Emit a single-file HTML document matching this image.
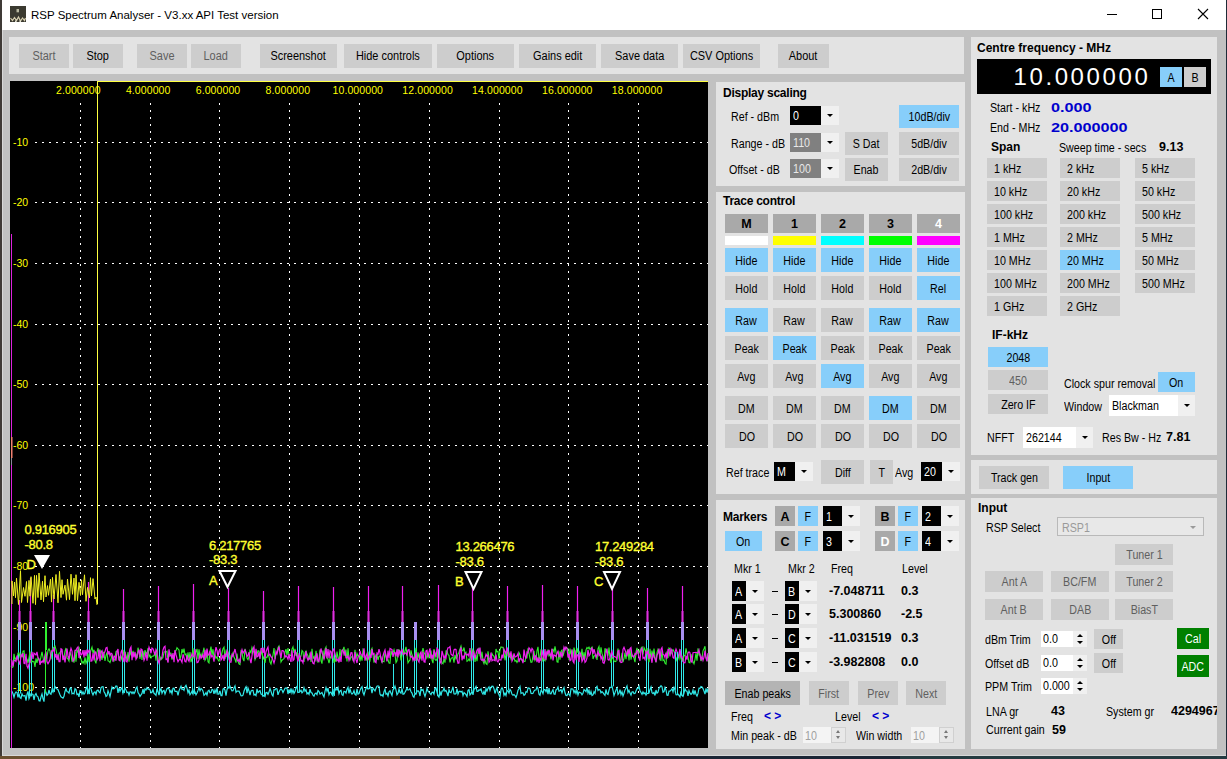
<!DOCTYPE html><html><head><meta charset="utf-8"><style>
html,body{margin:0;padding:0;width:1227px;height:759px;overflow:hidden;background:#1b2633;}
body{position:relative;font-family:"Liberation Sans",sans-serif;}
div{position:absolute;box-sizing:border-box;}
.b{display:flex;align-items:center;justify-content:center;white-space:nowrap;letter-spacing:0;padding-top:1.5px;}
.t{white-space:nowrap;letter-spacing:0;}
</style></head><body>

<div style="left:0px;top:0px;width:1227px;height:759px;background:#1e2b38;"></div>
<div style="left:0px;top:0px;width:2px;height:759px;background:#3f3a36;"></div>
<div style="left:0px;top:756px;width:400px;height:3px;background:#6b5030;"></div>
<div style="left:400px;top:756px;width:500px;height:3px;background:#1a2535;"></div>
<div style="left:900px;top:756px;width:327px;height:3px;background:#243a40;"></div>
<div style="left:2px;top:0px;width:1224px;height:756px;background:#c1c1c1;"></div>
<div style="left:2px;top:30px;width:1px;height:726px;background:#d8d8d8;"></div>
<div style="left:2px;top:755px;width:1224px;height:1px;background:#d8d8d8;"></div>
<div style="left:2px;top:0px;width:1224px;height:30px;background:#ffffff;"></div>
<div style="left:10px;top:6px;width:16px;height:16px;background:#3b3a30;"></div>
<svg style="position:absolute;left:10px;top:6px" width="16" height="16"><rect x="6.5" y="3" width="2.5" height="3.3" fill="#b8b8a0"/><polyline points="0.5,12 2.5,14.5 4.5,11.5 6.5,14.5 8.5,11 10.5,15 12.5,12 14.5,14.5 15.5,12" fill="none" stroke="#d8d0b0" stroke-width="1.2"/><rect x="5" y="14.5" width="1.5" height="1.5" fill="#e0e0d0"/><rect x="9.5" y="14.5" width="1.5" height="1.5" fill="#e0e0d0"/></svg>
<div class="t" style="left:31px;top:9.5px;font-size:11.5px;line-height:11.5px;color:#000;letter-spacing:0px;">RSP Spectrum Analyser - V3.xx API Test version</div>
<div style="left:1107px;top:14px;width:10px;height:1px;background:#000;"></div>
<div style="left:1152px;top:9px;width:10px;height:10px;background:transparent;border:1px solid #000;"></div>
<svg style="position:absolute;left:1197px;top:8px" width="12" height="12"><path d="M1 1L11 11M11 1L1 11" stroke="#000" stroke-width="1.1"/></svg>
<div style="left:9px;top:37px;width:955px;height:37px;background:#e3e3e3;"></div>
<div class="b" style="left:19px;top:44px;width:50px;height:24px;background:#cdcdcd;color:#5f5f5f;font-size:12.3px;padding-top:0;padding-bottom:0.5px;"><span style="display:inline-block;transform:scaleX(0.89)">Start</span></div>
<div class="b" style="left:73px;top:44px;width:50px;height:24px;background:#cdcdcd;color:#000;font-size:12.3px;padding-top:0;padding-bottom:0.5px;"><span style="display:inline-block;transform:scaleX(0.89)">Stop</span></div>
<div class="b" style="left:137px;top:44px;width:50px;height:24px;background:#cdcdcd;color:#5f5f5f;font-size:12.3px;padding-top:0;padding-bottom:0.5px;"><span style="display:inline-block;transform:scaleX(0.89)">Save</span></div>
<div class="b" style="left:191px;top:44px;width:50px;height:24px;background:#cdcdcd;color:#5f5f5f;font-size:12.3px;padding-top:0;padding-bottom:0.5px;"><span style="display:inline-block;transform:scaleX(0.89)">Load</span></div>
<div class="b" style="left:260px;top:44px;width:77px;height:24px;background:#cdcdcd;color:#000;font-size:12.3px;padding-top:0;padding-bottom:0.5px;"><span style="display:inline-block;transform:scaleX(0.89)">Screenshot</span></div>
<div class="b" style="left:344px;top:44px;width:88px;height:24px;background:#cdcdcd;color:#000;font-size:12.3px;padding-top:0;padding-bottom:0.5px;"><span style="display:inline-block;transform:scaleX(0.89)">Hide controls</span></div>
<div class="b" style="left:437px;top:44px;width:77px;height:24px;background:#cdcdcd;color:#000;font-size:12.3px;padding-top:0;padding-bottom:0.5px;"><span style="display:inline-block;transform:scaleX(0.89)">Options</span></div>
<div class="b" style="left:519px;top:44px;width:77px;height:24px;background:#cdcdcd;color:#000;font-size:12.3px;padding-top:0;padding-bottom:0.5px;"><span style="display:inline-block;transform:scaleX(0.89)">Gains edit</span></div>
<div class="b" style="left:601px;top:44px;width:77px;height:24px;background:#cdcdcd;color:#000;font-size:12.3px;padding-top:0;padding-bottom:0.5px;"><span style="display:inline-block;transform:scaleX(0.89)">Save data</span></div>
<div class="b" style="left:683px;top:44px;width:77px;height:24px;background:#cdcdcd;color:#000;font-size:12.3px;padding-top:0;padding-bottom:0.5px;"><span style="display:inline-block;transform:scaleX(0.89)">CSV Options</span></div>
<div class="b" style="left:778px;top:44px;width:51px;height:24px;background:#cdcdcd;color:#000;font-size:12.3px;padding-top:0;padding-bottom:0.5px;"><span style="display:inline-block;transform:scaleX(0.89)">About</span></div>
<div style="left:10px;top:81px;width:698px;height:667px;background:#000;"></div>
<div class="t" style="left:48.3px;top:84px;width:60px;text-align:center;font-size:10.5px;line-height:12px;color:#ffff00;letter-spacing:0.1px">2.000000</div>
<div class="t" style="left:118.2px;top:84px;width:60px;text-align:center;font-size:10.5px;line-height:12px;color:#ffff00;letter-spacing:0.1px">4.000000</div>
<div class="t" style="left:188.0px;top:84px;width:60px;text-align:center;font-size:10.5px;line-height:12px;color:#ffff00;letter-spacing:0.1px">6.000000</div>
<div class="t" style="left:257.9px;top:84px;width:60px;text-align:center;font-size:10.5px;line-height:12px;color:#ffff00;letter-spacing:0.1px">8.000000</div>
<div class="t" style="left:327.8px;top:84px;width:60px;text-align:center;font-size:10.5px;line-height:12px;color:#ffff00;letter-spacing:0.1px">10.000000</div>
<div class="t" style="left:397.6px;top:84px;width:60px;text-align:center;font-size:10.5px;line-height:12px;color:#ffff00;letter-spacing:0.1px">12.000000</div>
<div class="t" style="left:467.4px;top:84px;width:60px;text-align:center;font-size:10.5px;line-height:12px;color:#ffff00;letter-spacing:0.1px">14.000000</div>
<div class="t" style="left:537.3px;top:84px;width:60px;text-align:center;font-size:10.5px;line-height:12px;color:#ffff00;letter-spacing:0.1px">16.000000</div>
<div class="t" style="left:607.1px;top:84px;width:60px;text-align:center;font-size:10.5px;line-height:12px;color:#ffff00;letter-spacing:0.1px">18.000000</div>
<div class="t" style="left:13px;top:135.5px;font-size:10.5px;line-height:12px;color:#ffff00;letter-spacing:0">-10</div>
<div class="t" style="left:13px;top:195.5px;font-size:10.5px;line-height:12px;color:#ffff00;letter-spacing:0">-20</div>
<div class="t" style="left:13px;top:256.5px;font-size:10.5px;line-height:12px;color:#ffff00;letter-spacing:0">-30</div>
<div class="t" style="left:13px;top:317.5px;font-size:10.5px;line-height:12px;color:#ffff00;letter-spacing:0">-40</div>
<div class="t" style="left:13px;top:377.5px;font-size:10.5px;line-height:12px;color:#ffff00;letter-spacing:0">-50</div>
<div class="t" style="left:13px;top:438.5px;font-size:10.5px;line-height:12px;color:#ffff00;letter-spacing:0">-60</div>
<div class="t" style="left:13px;top:498.5px;font-size:10.5px;line-height:12px;color:#ffff00;letter-spacing:0">-70</div>
<div class="t" style="left:13px;top:559.5px;font-size:10.5px;line-height:12px;color:#ffff00;letter-spacing:0">-80</div>
<div class="t" style="left:13px;top:620.5px;font-size:10.5px;line-height:12px;color:#ffff00;letter-spacing:0">-90</div>
<div class="t" style="left:13px;top:680.5px;font-size:10.5px;line-height:12px;color:#ffff00;letter-spacing:0">-100</div>
<div class="t" style="left:24.5px;top:522.5px;font-size:13px;line-height:13px;color:#ffff30;letter-spacing:-0.3px;-webkit-text-stroke:0.35px #ffff30">0.916905</div>
<div class="t" style="left:24.5px;top:537.5px;font-size:13px;line-height:13px;color:#ffff30;letter-spacing:-0.3px;-webkit-text-stroke:0.35px #ffff30">-80.8</div>
<div class="t" style="left:26.5px;top:557.5px;font-size:13px;line-height:13px;color:#ffff30;letter-spacing:-0.3px;-webkit-text-stroke:0.35px #ffff30">D</div>
<div class="t" style="left:209px;top:539px;font-size:13px;line-height:13px;color:#ffff30;letter-spacing:-0.3px;-webkit-text-stroke:0.35px #ffff30">6.217765</div>
<div class="t" style="left:209px;top:553px;font-size:13px;line-height:13px;color:#ffff30;letter-spacing:-0.3px;-webkit-text-stroke:0.35px #ffff30">-83.3</div>
<div class="t" style="left:209px;top:573.5px;font-size:13px;line-height:13px;color:#ffff30;letter-spacing:-0.3px;-webkit-text-stroke:0.35px #ffff30">A</div>
<div class="t" style="left:455.5px;top:539.5px;font-size:13px;line-height:13px;color:#ffff30;letter-spacing:-0.3px;-webkit-text-stroke:0.35px #ffff30">13.266476</div>
<div class="t" style="left:455.5px;top:554.5px;font-size:13px;line-height:13px;color:#ffff30;letter-spacing:-0.3px;-webkit-text-stroke:0.35px #ffff30">-83.6</div>
<div class="t" style="left:455px;top:574.5px;font-size:13px;line-height:13px;color:#ffff30;letter-spacing:-0.3px;-webkit-text-stroke:0.35px #ffff30">B</div>
<div class="t" style="left:595px;top:539.5px;font-size:13px;line-height:13px;color:#ffff30;letter-spacing:-0.3px;-webkit-text-stroke:0.35px #ffff30">17.249284</div>
<div class="t" style="left:595px;top:554.5px;font-size:13px;line-height:13px;color:#ffff30;letter-spacing:-0.3px;-webkit-text-stroke:0.35px #ffff30">-83.6</div>
<div class="t" style="left:594px;top:574.5px;font-size:13px;line-height:13px;color:#ffff30;letter-spacing:-0.3px;-webkit-text-stroke:0.35px #ffff30">C</div>
<svg style="position:absolute;left:0px;top:0px" width="1227" height="759" viewBox="0 0 1227 759">
<g>
<g shape-rendering="crispEdges">
<line x1="80.5" y1="103" x2="80.5" y2="748" stroke="#fff" stroke-width="1" stroke-dasharray="2 5"/>
<line x1="150.5" y1="103" x2="150.5" y2="748" stroke="#fff" stroke-width="1" stroke-dasharray="2 5"/>
<line x1="219.5" y1="103" x2="219.5" y2="748" stroke="#fff" stroke-width="1" stroke-dasharray="2 5"/>
<line x1="289.5" y1="103" x2="289.5" y2="748" stroke="#fff" stroke-width="1" stroke-dasharray="2 5"/>
<line x1="359.5" y1="103" x2="359.5" y2="748" stroke="#fff" stroke-width="1" stroke-dasharray="2 5"/>
<line x1="429.5" y1="103" x2="429.5" y2="748" stroke="#fff" stroke-width="1" stroke-dasharray="2 5"/>
<line x1="499.5" y1="103" x2="499.5" y2="748" stroke="#fff" stroke-width="1" stroke-dasharray="2 5"/>
<line x1="568.5" y1="103" x2="568.5" y2="748" stroke="#fff" stroke-width="1" stroke-dasharray="2 5"/>
<line x1="638.5" y1="103" x2="638.5" y2="748" stroke="#fff" stroke-width="1" stroke-dasharray="2 5"/>
<line x1="35" y1="142.5" x2="708" y2="142.5" stroke="#fff" stroke-width="1" stroke-dasharray="2 5"/>
<line x1="35" y1="202.5" x2="708" y2="202.5" stroke="#fff" stroke-width="1" stroke-dasharray="2 5"/>
<line x1="35" y1="263.5" x2="708" y2="263.5" stroke="#fff" stroke-width="1" stroke-dasharray="2 5"/>
<line x1="35" y1="324.5" x2="708" y2="324.5" stroke="#fff" stroke-width="1" stroke-dasharray="2 5"/>
<line x1="35" y1="384.5" x2="708" y2="384.5" stroke="#fff" stroke-width="1" stroke-dasharray="2 5"/>
<line x1="35" y1="445.5" x2="708" y2="445.5" stroke="#fff" stroke-width="1" stroke-dasharray="2 5"/>
<line x1="35" y1="505.5" x2="708" y2="505.5" stroke="#fff" stroke-width="1" stroke-dasharray="2 5"/>
<line x1="35" y1="566.5" x2="708" y2="566.5" stroke="#fff" stroke-width="1" stroke-dasharray="2 5"/>
<line x1="35" y1="627.5" x2="708" y2="627.5" stroke="#fff" stroke-width="1" stroke-dasharray="2 5"/>
<line x1="35" y1="687.5" x2="708" y2="687.5" stroke="#fff" stroke-width="1" stroke-dasharray="2 5"/>
</g>
<polyline points="11,692.1 12,691.5 13,693.8 14,697.2 15,693.5 16,692.0 17,692.5 18,697.4 19,693.6 20,697.7 21,698.4 22,693.9 23,695.9 24,695.8 25,695.5 26,700.6 27,694.3 28,691.4 29,698.7 30,696.4 31,693.7 32,694.0 33,694.4 34,699.9 35,695.1 36,693.5 37,696.2 38,696.8 39,700.7 40,701.0 41,696.8 42,693.9 43,698.6 44,701.6 45,689.1 46,692.8 47,695.3 48,694.2 49,689.9 50,693.6 51,694.3 52,689.7 53,692.1 54,689.2 55,686.6 56,688.3 57,688.9 58,689.7 59,692.2 60,694.8 61,696.8 62,697.6 63,698.1 64,696.4 65,691.5 66,688.6 67,691.6 68,691.9 69,693.2 70,688.4 71,687.7 72,693.9 73,693.3 74,693.9 75,688.7 76,689.6 77,694.5 78,693.9 79,696.8 80,690.6 81,690.8 82,694.0 83,691.9 84,694.2 85,693.0 86,688.6 87,686.9 88,694.2 89,689.0 90,687.9 91,688.8 92,692.5 93,695.0 94,692.5 95,691.8 96,694.2 97,690.5 98,690.0 99,692.0 100,692.9 101,687.8 102,686.7 103,686.6 104,691.8 105,693.3 106,696.4 107,695.6 108,690.7 109,693.6 110,696.6 111,691.9 112,687.2 113,688.9 114,688.6 115,687.6 116,686.0 117,686.2 118,692.9 119,688.0 120,691.3 121,688.8 122,687.8 123,693.1 124,690.2 125,688.2 126,689.9 127,692.7 128,692.1 129,695.0 130,691.8 131,691.8 132,693.6 133,691.9 134,693.6 135,691.9 136,688.4 137,687.0 138,692.5 139,694.0 140,696.4 141,694.9 142,693.4 143,689.2 144,693.9 145,688.9 146,689.9 147,687.7 148,689.1 149,688.9 150,689.9 151,692.8 152,692.3 153,689.5 154,693.3 155,694.2 156,695.4 157,688.7 158,691.5 159,695.1 160,690.6 161,688.5 162,693.3 163,690.9 164,690.4 165,694.0 166,691.3 167,688.7 168,688.0 169,688.9 170,692.4 171,690.6 172,693.6 173,688.3 174,688.1 175,691.4 176,691.3 177,691.4 178,695.4 179,690.9 180,688.4 181,686.2 182,689.5 183,689.0 184,690.4 185,686.7 186,685.3 187,688.2 188,692.7 189,690.1 190,694.7 191,693.3 192,691.3 193,693.9 194,689.9 195,691.9 196,694.8 197,693.0 198,690.4 199,687.5 200,690.8 201,688.4 202,689.3 203,691.1 204,695.3 205,694.4 206,692.7 207,695.1 208,691.1 209,690.3 210,692.7 211,692.4 212,689.3 213,689.9 214,693.9 215,690.0 216,692.8 217,687.9 218,694.3 219,694.1 220,690.8 221,695.6 222,695.6 223,689.0 224,688.4 225,690.3 226,695.6 227,689.7 228,686.8 229,688.2 230,686.2 231,688.8 232,690.9 233,690.8 234,688.0 235,686.0 236,692.3 237,691.2 238,691.2 239,691.2 240,693.1 241,695.7 242,695.9 243,695.1 244,691.3 245,688.5 246,686.7 247,693.1 248,688.1 249,690.9 250,695.0 251,691.1 252,690.4 253,690.4 254,695.1 255,694.4 256,695.6 257,688.8 258,692.6 259,691.5 260,690.6 261,694.0 262,694.5 263,696.2 264,695.3 265,696.5 266,692.6 267,692.4 268,694.4 269,692.1 270,688.4 271,691.2 272,694.7 273,696.0 274,689.7 275,689.8 276,688.5 277,689.0 278,694.8 279,691.9 280,690.0 281,688.9 282,690.1 283,692.5 284,690.4 285,688.3 286,687.9 287,688.1 288,694.0 289,689.4 290,693.0 291,688.5 292,693.0 293,689.9 294,693.5 295,691.6 296,687.7 297,686.5 298,692.5 299,692.2 300,691.6 301,690.2 302,692.8 303,691.8 304,687.7 305,691.1 306,689.7 307,694.0 308,692.8 309,694.4 310,689.1 311,692.5 312,692.9 313,695.1 314,696.2 315,693.6 316,693.1 317,694.5 318,690.4 319,691.5 320,694.1 321,693.3 322,692.5 323,695.1 324,697.0 325,691.3 326,687.6 327,691.2 328,688.2 329,694.6 330,692.3 331,692.1 332,694.6 333,695.9 334,689.8 335,690.5 336,688.3 337,690.0 338,687.7 339,693.6 340,690.9 341,690.3 342,694.7 343,695.5 344,691.4 345,691.5 346,693.0 347,689.2 348,687.4 349,693.3 350,689.1 351,692.5 352,694.0 353,693.2 354,690.7 355,694.4 356,695.1 357,688.9 358,694.2 359,693.7 360,690.4 361,688.1 362,686.7 363,692.6 364,695.0 365,691.4 366,688.6 367,686.6 368,689.0 369,688.8 370,686.5 371,687.9 372,693.1 373,688.2 374,689.5 375,690.9 376,688.3 377,686.2 378,685.8 379,686.3 380,694.0 381,695.6 382,694.8 383,696.2 384,691.6 385,689.3 386,694.1 387,693.3 388,696.0 389,691.8 390,690.8 391,693.2 392,695.5 393,689.9 394,688.8 395,686.2 396,690.2 397,694.8 398,693.3 399,689.0 400,692.3 401,693.1 402,688.5 403,694.2 404,693.9 405,692.2 406,690.4 407,688.0 408,690.0 409,689.8 410,688.5 411,691.8 412,693.0 413,696.1 414,697.3 415,693.2 416,694.1 417,691.3 418,690.8 419,691.9 420,696.0 421,688.9 422,690.3 423,689.6 424,693.6 425,696.3 426,692.9 427,688.2 428,691.2 429,692.2 430,693.4 431,694.6 432,692.3 433,692.2 434,694.2 435,688.2 436,688.0 437,692.0 438,696.0 439,697.1 440,691.5 441,695.7 442,691.0 443,690.9 444,688.2 445,691.3 446,690.4 447,692.8 448,696.1 449,689.7 450,692.3 451,692.7 452,689.9 453,686.8 454,693.8 455,694.1 456,693.5 457,688.6 458,694.1 459,691.5 460,691.2 461,691.9 462,691.2 463,695.5 464,692.6 465,693.5 466,694.6 467,696.5 468,690.3 469,689.6 470,694.9 471,693.6 472,691.1 473,694.8 474,689.2 475,688.5 476,686.6 477,691.3 478,691.3 479,689.7 480,690.3 481,688.9 482,692.5 483,694.2 484,691.4 485,694.8 486,688.5 487,691.1 488,688.2 489,686.9 490,690.4 491,687.4 492,686.2 493,686.4 494,688.6 495,693.5 496,690.3 497,687.7 498,692.6 499,694.7 500,697.1 501,689.4 502,687.8 503,689.6 504,695.3 505,693.2 506,695.5 507,690.4 508,690.9 509,693.0 510,689.5 511,691.0 512,694.3 513,695.3 514,694.6 515,695.5 516,697.4 517,694.5 518,690.3 519,688.6 520,686.5 521,693.5 522,692.8 523,692.9 524,695.3 525,694.6 526,691.6 527,692.3 528,688.0 529,688.1 530,688.9 531,693.2 532,693.6 533,693.2 534,691.1 535,690.0 536,689.9 537,686.9 538,688.6 539,694.2 540,695.3 541,690.6 542,691.2 543,693.6 544,689.5 545,689.5 546,691.6 547,688.7 548,694.2 549,688.1 550,693.7 551,693.8 552,691.4 553,689.6 554,694.1 555,694.3 556,689.9 557,689.3 558,687.1 559,691.1 560,690.7 561,689.6 562,692.7 563,689.7 564,687.6 565,692.8 566,695.4 567,695.6 568,693.5 569,694.1 570,695.7 571,688.8 572,688.8 573,689.2 574,692.8 575,690.5 576,693.5 577,690.0 578,695.0 579,692.1 580,692.5 581,693.0 582,694.9 583,693.3 584,689.5 585,690.3 586,691.6 587,687.7 588,693.1 589,690.3 590,694.9 591,691.5 592,695.6 593,694.9 594,691.7 595,693.4 596,687.7 597,686.4 598,690.5 599,689.4 600,689.9 601,692.8 602,691.7 603,692.6 604,694.1 605,695.4 606,689.3 607,693.7 608,694.5 609,690.1 610,687.3 611,687.3 612,686.3 613,690.3 614,695.5 615,692.8 616,689.9 617,688.0 618,694.5 619,693.0 620,689.7 621,694.6 622,691.8 623,696.0 624,693.2 625,689.9 626,688.1 627,686.0 628,692.4 629,690.3 630,693.1 631,695.1 632,691.9 633,691.7 634,693.6 635,693.5 636,691.0 637,688.6 638,688.6 639,686.2 640,690.8 641,692.5 642,694.3 643,691.9 644,693.7 645,692.8 646,695.1 647,693.2 648,693.7 649,693.2 650,689.4 651,687.0 652,692.8 653,693.7 654,692.4 655,695.5 656,690.0 657,693.1 658,692.1 659,688.2 660,687.0 661,685.7 662,686.7 663,692.3 664,691.6 665,687.5 666,690.0 667,695.2 668,695.4 669,691.1 670,691.2 671,690.2 672,688.6 673,691.9 674,687.4 675,689.8 676,694.8 677,694.9 678,694.1 679,695.4 680,696.9 681,691.3 682,695.5 683,696.4 684,693.2 685,688.8 686,690.9 687,691.2 688,695.9 689,690.7 690,693.2 691,694.4 692,693.4 693,690.2 694,694.7 695,690.4 696,694.3 697,696.0 698,693.4 699,688.1 700,688.3 701,686.5 702,686.9 703,688.6 704,691.1 705,694.1 706,688.3 707,692.6 708,688.4" fill="none" stroke="#30e8e8" stroke-width="1.2"/>
<path d="M18.5,693.6V640M20.5,693.6V640" stroke="#30e8e8" stroke-width="1" fill="none"/>
<path d="M29.5,696.4V640M31.5,696.4V640" stroke="#30e8e8" stroke-width="1" fill="none"/>
<path d="M52.5,692.1V640M54.5,692.1V640" stroke="#30e8e8" stroke-width="1" fill="none"/>
<path d="M87.5,694.2V640M89.5,694.2V640" stroke="#30e8e8" stroke-width="1" fill="none"/>
<path d="M122.5,693.1V640M124.5,693.1V640" stroke="#30e8e8" stroke-width="1" fill="none"/>
<path d="M157.5,691.5V640M159.5,691.5V640" stroke="#30e8e8" stroke-width="1" fill="none"/>
<path d="M192.5,693.9V640M194.5,693.9V640" stroke="#30e8e8" stroke-width="1" fill="none"/>
<path d="M227.5,686.8V640M229.5,686.8V640" stroke="#30e8e8" stroke-width="1" fill="none"/>
<path d="M262.5,696.2V640M264.5,696.2V640" stroke="#30e8e8" stroke-width="1" fill="none"/>
<path d="M297.5,692.5V640M299.5,692.5V640" stroke="#30e8e8" stroke-width="1" fill="none"/>
<path d="M332.5,695.9V640M334.5,695.9V640" stroke="#30e8e8" stroke-width="1" fill="none"/>
<path d="M367.5,689.0V640M369.5,689.0V640" stroke="#30e8e8" stroke-width="1" fill="none"/>
<path d="M401.5,688.5V640M403.5,688.5V640" stroke="#30e8e8" stroke-width="1" fill="none"/>
<path d="M414.5,693.2V640M416.5,693.2V640" stroke="#30e8e8" stroke-width="1" fill="none"/>
<path d="M437.5,696.0V640M439.5,696.0V640" stroke="#30e8e8" stroke-width="1" fill="none"/>
<path d="M471.5,691.1V640M473.5,691.1V640" stroke="#30e8e8" stroke-width="1" fill="none"/>
<path d="M506.5,690.4V640M508.5,690.4V640" stroke="#30e8e8" stroke-width="1" fill="none"/>
<path d="M541.5,691.2V640M543.5,691.2V640" stroke="#30e8e8" stroke-width="1" fill="none"/>
<path d="M576.5,690.0V640M578.5,690.0V640" stroke="#30e8e8" stroke-width="1" fill="none"/>
<path d="M611.5,686.3V640M613.5,686.3V640" stroke="#30e8e8" stroke-width="1" fill="none"/>
<path d="M646.5,693.2V640M648.5,693.2V640" stroke="#30e8e8" stroke-width="1" fill="none"/>
<path d="M681.5,695.5V640M683.5,695.5V640" stroke="#30e8e8" stroke-width="1" fill="none"/>
<polyline points="11,665.8 12,667.5 13,667.0 14,653.9 15,659.5 16,657.9 17,659.3 18,653.1 19,652.9 20,656.9 21,654.1 22,657.3 23,651.1 24,650.8 25,660.7 26,658.1 27,659.0 28,662.8 29,657.5 30,651.6 31,662.1 32,661.0 33,661.9 34,661.5 35,667.0 36,658.4 37,663.0 38,657.7 39,659.9 40,661.7 41,656.6 42,651.9 43,657.2 44,662.1 45,657.1 46,654.6 47,657.2 48,650.4 49,648.9 50,651.0 51,659.2 52,651.0 53,648.0 54,647.2 55,646.1 56,649.6 57,655.1 58,660.1 59,653.3 60,652.6 61,651.1 62,651.1 63,658.7 64,656.5 65,651.4 66,648.0 67,658.1 68,658.9 69,661.0 70,652.0 71,655.1 72,661.7 73,657.8 74,662.7 75,651.2 76,661.8 77,649.3 78,652.5 79,646.9 80,658.3 81,658.7 82,663.3 83,661.5 84,663.5 85,657.3 86,663.3 87,660.6 88,653.7 89,662.3 90,654.5 91,650.0 92,647.2 93,652.9 94,649.7 95,660.9 96,663.4 97,652.1 98,648.1 99,654.1 100,649.5 101,654.6 102,659.9 103,652.0 104,653.2 105,661.0 106,655.3 107,652.5 108,660.8 109,661.2 110,662.6 111,659.5 112,654.5 113,658.0 114,660.9 115,658.4 116,651.5 117,651.0 118,652.8 119,658.9 120,656.7 121,656.1 122,660.5 123,649.8 124,656.1 125,652.5 126,655.5 127,660.5 128,652.1 129,661.6 130,649.6 131,654.9 132,655.7 133,650.9 134,655.2 135,654.6 136,654.1 137,658.3 138,647.7 139,651.6 140,658.9 141,650.0 142,659.9 143,651.2 144,657.1 145,650.2 146,653.2 147,653.4 148,648.0 149,656.8 150,655.0 151,658.0 152,656.2 153,656.1 154,655.6 155,651.9 156,660.8 157,649.5 158,659.9 159,661.8 160,656.3 161,659.7 162,658.7 163,657.4 164,652.2 165,651.5 166,651.9 167,651.2 168,661.6 169,653.8 170,653.0 171,653.3 172,659.7 173,655.6 174,656.0 175,651.3 176,650.7 177,647.6 178,649.0 179,650.0 180,659.6 181,656.0 182,649.0 183,653.2 184,648.6 185,654.8 186,654.0 187,660.5 188,652.3 189,660.1 190,652.0 191,662.1 192,658.6 193,648.4 194,658.6 195,652.1 196,652.2 197,648.8 198,659.2 199,649.3 200,657.7 201,653.9 202,657.6 203,652.2 204,647.7 205,660.2 206,658.5 207,650.4 208,661.7 209,662.9 210,651.5 211,646.6 212,655.1 213,649.2 214,657.6 215,655.0 216,658.3 217,656.8 218,659.7 219,661.1 220,657.9 221,657.0 222,652.6 223,648.7 224,647.2 225,659.2 226,651.1 227,653.1 228,651.7 229,656.2 230,655.8 231,660.9 232,655.2 233,652.8 234,657.0 235,659.3 236,662.7 237,653.5 238,660.9 239,663.9 240,664.5 241,651.0 242,652.3 243,658.8 244,661.1 245,648.8 246,652.1 247,658.0 248,659.7 249,656.5 250,650.7 251,652.6 252,647.5 253,650.5 254,652.9 255,659.8 256,657.4 257,654.1 258,650.8 259,651.2 260,657.0 261,654.5 262,649.7 263,659.1 264,657.0 265,662.9 266,657.2 267,657.4 268,654.3 269,656.6 270,662.0 271,664.1 272,659.4 273,654.8 274,648.0 275,659.0 276,654.1 277,652.9 278,647.5 279,646.0 280,651.5 281,661.9 282,660.2 283,659.4 284,658.6 285,652.1 286,649.1 287,655.5 288,648.1 289,655.0 290,655.2 291,655.7 292,649.1 293,646.9 294,653.0 295,648.9 296,656.0 297,652.2 298,656.4 299,659.3 300,657.6 301,656.0 302,650.4 303,651.6 304,662.0 305,652.7 306,651.1 307,654.1 308,655.6 309,659.8 310,652.7 311,661.9 312,648.7 313,658.4 314,656.8 315,661.8 316,650.8 317,657.2 318,662.6 319,659.2 320,649.6 321,660.7 322,663.6 323,650.5 324,659.3 325,649.1 326,647.1 327,658.2 328,659.1 329,663.1 330,658.7 331,655.9 332,651.5 333,655.5 334,663.0 335,658.9 336,661.8 337,651.5 338,658.1 339,659.3 340,649.0 341,658.9 342,650.6 343,649.6 344,646.9 345,656.0 346,649.5 347,661.5 348,648.3 349,658.6 350,659.9 351,657.1 352,656.6 353,660.1 354,658.2 355,649.9 356,658.7 357,653.4 358,656.0 359,655.4 360,661.5 361,654.9 362,660.6 363,649.4 364,651.1 365,657.0 366,657.2 367,660.8 368,651.5 369,659.2 370,660.6 371,650.4 372,648.3 373,655.0 374,662.6 375,658.3 376,654.5 377,655.0 378,660.0 379,656.3 380,655.9 381,656.7 382,662.2 383,661.3 384,661.7 385,652.6 386,656.1 387,660.4 388,659.6 389,663.1 390,663.3 391,650.7 392,654.3 393,652.6 394,649.8 395,654.0 396,662.5 397,660.8 398,649.7 399,649.9 400,651.9 401,660.5 402,655.5 403,649.6 404,654.7 405,650.9 406,646.8 407,654.8 408,662.8 409,661.0 410,660.0 411,650.4 412,655.1 413,657.2 414,659.6 415,655.1 416,647.9 417,660.4 418,652.3 419,658.3 420,655.1 421,659.5 422,653.3 423,648.1 424,652.5 425,654.2 426,659.5 427,654.4 428,657.5 429,653.5 430,658.4 431,650.5 432,660.2 433,663.1 434,649.0 435,659.5 436,660.4 437,659.2 438,649.5 439,657.6 440,659.9 441,658.0 442,663.0 443,663.8 444,658.9 445,662.6 446,650.8 447,650.9 448,654.7 449,655.3 450,662.3 451,658.6 452,657.7 453,657.5 454,662.6 455,654.9 456,658.8 457,657.4 458,653.9 459,652.2 460,648.9 461,646.0 462,650.6 463,650.9 464,647.5 465,653.3 466,652.3 467,661.3 468,660.7 469,658.8 470,661.3 471,652.7 472,648.4 473,655.4 474,650.7 475,661.9 476,655.2 477,661.2 478,652.2 479,647.9 480,655.6 481,658.2 482,651.7 483,661.2 484,663.8 485,659.8 486,663.7 487,664.5 488,651.3 489,657.9 490,659.5 491,659.6 492,653.4 493,655.4 494,656.5 495,660.9 496,649.0 497,651.8 498,651.4 499,658.9 500,649.7 501,646.9 502,647.2 503,647.3 504,652.4 505,660.3 506,653.7 507,648.4 508,656.4 509,652.6 510,655.7 511,659.1 512,655.1 513,658.8 514,657.7 515,661.2 516,660.4 517,662.5 518,660.4 519,652.6 520,654.6 521,659.3 522,660.4 523,659.8 524,661.4 525,661.5 526,657.0 527,657.6 528,648.2 529,653.3 530,658.3 531,662.3 532,662.0 533,655.4 534,650.8 535,660.3 536,658.6 537,650.8 538,646.8 539,659.4 540,657.1 541,649.2 542,661.7 543,657.7 544,659.7 545,660.8 546,652.3 547,654.8 548,649.7 549,655.7 550,654.1 551,659.5 552,649.7 553,649.2 554,652.0 555,646.4 556,651.8 557,661.8 558,662.2 559,651.3 560,659.6 561,651.5 562,650.1 563,656.2 564,652.0 565,649.6 566,647.3 567,648.3 568,648.7 569,660.3 570,648.7 571,654.4 572,650.3 573,657.6 574,647.6 575,651.5 576,658.1 577,648.0 578,652.2 579,651.7 580,654.1 581,656.9 582,648.7 583,659.6 584,652.2 585,658.8 586,649.9 587,647.5 588,648.6 589,647.1 590,649.4 591,648.1 592,647.0 593,659.0 594,656.3 595,655.2 596,655.2 597,660.0 598,648.7 599,646.5 600,656.0 601,647.3 602,653.6 603,656.7 604,660.9 605,648.2 606,652.1 607,651.4 608,655.6 609,647.6 610,657.6 611,662.8 612,657.3 613,658.1 614,661.0 615,661.7 616,661.4 617,656.1 618,648.6 619,658.4 620,661.2 621,659.5 622,652.9 623,662.2 624,658.4 625,652.7 626,659.1 627,651.4 628,650.1 629,660.5 630,649.0 631,659.7 632,654.3 633,656.0 634,658.3 635,662.1 636,651.9 637,647.9 638,653.8 639,650.3 640,652.9 641,648.3 642,647.1 643,654.5 644,647.7 645,649.8 646,652.2 647,648.0 648,658.5 649,662.1 650,648.9 651,658.7 652,650.6 653,657.8 654,648.5 655,657.6 656,662.4 657,652.6 658,649.2 659,651.3 660,660.0 661,660.5 662,650.6 663,660.6 664,659.9 665,663.3 666,664.2 667,651.4 668,657.9 669,648.0 670,648.7 671,654.3 672,650.6 673,649.6 674,651.6 675,653.7 676,661.4 677,657.6 678,656.4 679,658.8 680,650.8 681,659.0 682,660.0 683,661.0 684,655.4 685,655.8 686,648.3 687,653.0 688,656.9 689,662.6 690,662.9 691,654.0 692,658.9 693,661.5 694,663.7 695,659.6 696,653.2 697,660.6 698,648.4 699,654.8 700,654.3 701,661.0 702,658.1 703,650.8 704,648.8 705,646.3 706,657.3 707,660.0 708,654.0" fill="none" stroke="#30f030" stroke-width="1.1"/>
<polyline points="11,659.3 12,660.8 13,666.5 14,660.8 15,660.3 16,661.4 17,655.5 18,659.3 19,661.8 20,664.8 21,654.9 22,656.0 23,653.1 24,663.3 25,663.6 26,653.8 27,666.0 28,668.2 29,663.9 30,662.5 31,655.4 32,651.8 33,658.8 34,653.2 35,654.0 36,654.9 37,651.9 38,657.8 39,658.7 40,664.9 41,661.3 42,662.4 43,660.5 44,662.5 45,654.9 46,651.6 47,661.8 48,663.8 49,661.9 50,659.5 51,653.1 52,650.6 53,650.9 54,647.7 55,657.5 56,654.0 57,660.0 58,654.3 59,661.7 60,661.6 61,648.8 62,649.4 63,660.0 64,655.6 65,662.3 66,654.9 67,648.6 68,655.7 69,659.3 70,652.4 71,648.3 72,651.1 73,661.2 74,660.1 75,650.3 76,650.3 77,648.1 78,647.0 79,657.9 80,650.7 81,655.0 82,654.2 83,650.2 84,657.5 85,650.0 86,656.1 87,649.5 88,652.7 89,650.2 90,650.6 91,661.2 92,660.8 93,653.2 94,660.4 95,651.7 96,652.8 97,659.9 98,658.1 99,649.6 100,661.3 101,652.0 102,650.8 103,658.2 104,653.1 105,651.6 106,647.9 107,647.4 108,654.7 109,651.1 110,655.7 111,653.2 112,653.9 113,661.7 114,656.1 115,656.3 116,660.8 117,651.4 118,649.1 119,659.9 120,660.8 121,652.4 122,649.8 123,657.6 124,662.1 125,651.9 126,661.1 127,662.0 128,657.9 129,654.4 130,648.9 131,646.9 132,660.3 133,652.1 134,657.5 135,651.9 136,659.2 137,657.3 138,652.4 139,649.6 140,657.2 141,649.0 142,649.7 143,654.8 144,660.3 145,657.8 146,652.3 147,660.7 148,651.7 149,647.1 150,650.0 151,653.2 152,648.0 153,648.8 154,651.8 155,655.4 156,649.6 157,651.8 158,660.2 159,663.3 160,659.0 161,658.7 162,657.0 163,650.0 164,647.0 165,646.2 166,659.4 167,658.9 168,662.7 169,649.4 170,655.9 171,654.9 172,658.4 173,653.0 174,662.1 175,650.0 176,654.7 177,658.5 178,661.7 179,659.9 180,659.0 181,660.2 182,662.3 183,654.2 184,657.6 185,661.5 186,661.9 187,655.1 188,659.4 189,661.3 190,657.4 191,657.3 192,653.7 193,656.0 194,656.8 195,649.1 196,655.9 197,662.6 198,662.2 199,659.9 200,654.3 201,658.4 202,656.9 203,654.5 204,660.0 205,649.8 206,657.7 207,648.5 208,655.2 209,654.8 210,650.9 211,657.2 212,655.4 213,656.8 214,661.7 215,652.7 216,647.2 217,650.5 218,656.8 219,650.9 220,649.2 221,659.9 222,658.4 223,654.8 224,660.8 225,653.6 226,657.2 227,650.9 228,653.1 229,659.2 230,662.1 231,662.1 232,654.7 233,656.2 234,652.5 235,649.0 236,653.8 237,659.8 238,661.2 239,659.4 240,662.6 241,653.2 242,649.7 243,653.2 244,651.3 245,650.0 246,652.7 247,656.4 248,655.2 249,652.3 250,659.5 251,663.1 252,655.9 253,648.8 254,646.7 255,658.9 256,648.9 257,656.9 258,656.4 259,652.4 260,658.9 261,648.6 262,648.2 263,653.0 264,647.5 265,658.4 266,651.7 267,649.0 268,647.0 269,655.3 270,654.3 271,656.8 272,657.7 273,660.1 274,662.9 275,659.3 276,651.4 277,653.9 278,650.0 279,646.7 280,652.9 281,657.8 282,650.7 283,650.7 284,651.8 285,657.3 286,655.8 287,656.9 288,659.2 289,654.2 290,659.2 291,661.9 292,650.2 293,660.5 294,659.4 295,650.3 296,653.4 297,656.6 298,661.5 299,654.4 300,655.9 301,660.9 302,660.6 303,662.8 304,656.0 305,657.5 306,651.1 307,657.5 308,660.3 309,658.2 310,658.9 311,651.5 312,660.3 313,663.3 314,663.8 315,657.3 316,659.8 317,653.3 318,660.8 319,661.5 320,654.0 321,648.5 322,652.8 323,655.3 324,659.1 325,655.6 326,648.1 327,658.2 328,649.1 329,658.3 330,650.8 331,651.7 332,658.7 333,650.3 334,648.8 335,654.0 336,658.2 337,660.7 338,659.0 339,662.5 340,656.4 341,662.0 342,650.2 343,649.9 344,654.4 345,651.7 346,657.8 347,657.6 348,655.9 349,660.3 350,657.0 351,652.6 352,652.7 353,659.7 354,662.0 355,652.0 356,659.7 357,663.0 358,657.0 359,656.5 360,650.8 361,654.7 362,655.0 363,656.6 364,648.2 365,660.7 366,656.4 367,653.8 368,659.3 369,656.8 370,655.2 371,657.9 372,649.1 373,654.4 374,653.6 375,661.6 376,662.7 377,653.1 378,654.2 379,649.2 380,652.9 381,659.3 382,661.9 383,656.0 384,652.5 385,649.9 386,655.7 387,661.5 388,650.7 389,658.3 390,648.5 391,649.1 392,649.7 393,656.8 394,652.7 395,652.4 396,656.3 397,649.3 398,657.3 399,649.8 400,654.1 401,651.1 402,649.7 403,654.4 404,653.9 405,652.9 406,653.3 407,655.1 408,649.9 409,649.5 410,655.9 411,657.3 412,655.9 413,660.4 414,657.8 415,660.9 416,652.2 417,658.0 418,660.3 419,662.1 420,653.7 421,652.0 422,660.7 423,651.9 424,661.9 425,662.2 426,650.9 427,650.3 428,657.5 429,651.9 430,648.3 431,658.6 432,654.6 433,659.3 434,650.2 435,652.6 436,657.3 437,648.2 438,649.2 439,656.6 440,661.5 441,663.3 442,650.9 443,654.3 444,658.7 445,655.8 446,657.9 447,650.9 448,647.7 449,647.6 450,646.6 451,654.1 452,655.0 453,656.0 454,649.9 455,649.2 456,649.4 457,659.0 458,663.2 459,663.0 460,650.5 461,647.5 462,660.3 463,655.5 464,659.1 465,653.2 466,654.1 467,655.1 468,654.0 469,656.3 470,648.0 471,656.6 472,660.5 473,651.3 474,653.6 475,658.3 476,654.2 477,650.3 478,649.0 479,654.0 480,647.5 481,659.4 482,660.4 483,659.2 484,661.2 485,658.2 486,654.2 487,656.3 488,655.3 489,662.3 490,661.0 491,652.6 492,660.7 493,659.8 494,660.1 495,660.7 496,654.7 497,660.9 498,661.9 499,659.3 500,659.9 501,660.0 502,654.6 503,658.3 504,649.2 505,651.5 506,653.8 507,647.4 508,651.3 509,656.3 510,657.1 511,651.4 512,661.0 513,658.7 514,653.3 515,657.1 516,656.5 517,655.8 518,653.5 519,662.2 520,658.6 521,658.7 522,659.7 523,663.1 524,649.5 525,655.6 526,658.7 527,652.1 528,652.9 529,647.8 530,649.0 531,651.9 532,648.4 533,649.9 534,660.1 535,656.8 536,655.5 537,662.1 538,657.4 539,662.9 540,658.7 541,660.4 542,649.7 543,655.4 544,659.0 545,649.0 546,660.2 547,650.9 548,653.8 549,649.8 550,653.9 551,656.4 552,648.7 553,660.4 554,654.9 555,655.4 556,656.5 557,653.3 558,651.4 559,656.6 560,656.2 561,652.0 562,657.6 563,652.5 564,647.2 565,649.6 566,647.1 567,648.3 568,657.5 569,653.8 570,660.7 571,659.9 572,649.2 573,661.2 574,662.9 575,650.2 576,660.1 577,655.0 578,654.7 579,662.0 580,652.6 581,654.9 582,661.5 583,659.6 584,655.5 585,662.3 586,661.2 587,657.8 588,649.8 589,655.8 590,654.5 591,650.5 592,647.4 593,653.9 594,649.1 595,653.0 596,657.1 597,654.8 598,651.4 599,655.5 600,653.9 601,658.9 602,656.3 603,662.7 604,663.3 605,660.2 606,652.1 607,648.6 608,659.6 609,660.2 610,657.9 611,653.5 612,651.3 613,657.0 614,656.4 615,656.7 616,657.3 617,659.3 618,651.2 619,650.5 620,661.3 621,662.5 622,662.2 623,649.5 624,647.3 625,650.0 626,652.9 627,656.4 628,649.3 629,654.5 630,648.5 631,647.5 632,656.1 633,656.0 634,657.2 635,653.5 636,654.4 637,650.5 638,651.8 639,658.0 640,660.7 641,649.8 642,648.2 643,658.3 644,657.5 645,659.5 646,651.6 647,653.2 648,651.0 649,658.8 650,653.8 651,657.1 652,662.8 653,653.9 654,655.5 655,658.8 656,662.1 657,655.3 658,653.1 659,648.6 660,659.3 661,649.5 662,647.7 663,654.5 664,654.7 665,657.7 666,652.5 667,658.6 668,649.4 669,649.6 670,656.3 671,649.0 672,650.9 673,657.5 674,658.4 675,652.4 676,649.1 677,651.7 678,657.7 679,653.5 680,649.0 681,656.9 682,656.4 683,661.6 684,662.9 685,662.8 686,655.6 687,659.7 688,653.0 689,651.9 690,652.9 691,661.1 692,662.1 693,652.7 694,652.5 695,652.5 696,652.4 697,652.9 698,652.9 699,650.0 700,655.0 701,659.4 702,656.5 703,660.3 704,657.0 705,650.6 706,658.0 707,661.3 708,653.0" fill="none" stroke="#f020f0" stroke-width="1.2"/>
<path d="M19.5,600V622" stroke="#f020f0" stroke-width="1.2" fill="none"/>
<rect x="18.5" y="611" width="2" height="11" fill="#e030e0"/>
<rect x="18" y="622" width="3" height="18" fill="#a890f0"/>
<path d="M30.5,578V622" stroke="#f020f0" stroke-width="1.2" fill="none"/>
<rect x="29.5" y="611" width="2" height="11" fill="#e030e0"/>
<rect x="29" y="622" width="3" height="18" fill="#a890f0"/>
<path d="M53.5,595V622" stroke="#f020f0" stroke-width="1.2" fill="none"/>
<rect x="52.5" y="611" width="2" height="11" fill="#e030e0"/>
<rect x="52" y="622" width="3" height="18" fill="#a890f0"/>
<path d="M88.5,582V622" stroke="#f020f0" stroke-width="1.2" fill="none"/>
<rect x="87.5" y="611" width="2" height="11" fill="#e030e0"/>
<rect x="87" y="622" width="3" height="18" fill="#a890f0"/>
<path d="M123.5,589V622" stroke="#f020f0" stroke-width="1.2" fill="none"/>
<rect x="122.5" y="611" width="2" height="11" fill="#e030e0"/>
<rect x="122" y="622" width="3" height="18" fill="#a890f0"/>
<path d="M158.5,586V622" stroke="#f020f0" stroke-width="1.2" fill="none"/>
<rect x="157.5" y="611" width="2" height="11" fill="#e030e0"/>
<rect x="157" y="622" width="3" height="18" fill="#a890f0"/>
<path d="M193.5,584V622" stroke="#f020f0" stroke-width="1.2" fill="none"/>
<rect x="192.5" y="611" width="2" height="11" fill="#e030e0"/>
<rect x="192" y="622" width="3" height="18" fill="#a890f0"/>
<path d="M228.5,588V622" stroke="#f020f0" stroke-width="1.2" fill="none"/>
<rect x="227.5" y="611" width="2" height="11" fill="#e030e0"/>
<rect x="227" y="622" width="3" height="18" fill="#a890f0"/>
<path d="M263.5,591V622" stroke="#f020f0" stroke-width="1.2" fill="none"/>
<rect x="262.5" y="611" width="2" height="11" fill="#e030e0"/>
<rect x="262" y="622" width="3" height="18" fill="#a890f0"/>
<path d="M298.5,586V622" stroke="#f020f0" stroke-width="1.2" fill="none"/>
<rect x="297.5" y="611" width="2" height="11" fill="#e030e0"/>
<rect x="297" y="622" width="3" height="18" fill="#a890f0"/>
<path d="M333.5,587V622" stroke="#f020f0" stroke-width="1.2" fill="none"/>
<rect x="332.5" y="611" width="2" height="11" fill="#e030e0"/>
<rect x="332" y="622" width="3" height="18" fill="#a890f0"/>
<path d="M368.5,586V622" stroke="#f020f0" stroke-width="1.2" fill="none"/>
<rect x="367.5" y="611" width="2" height="11" fill="#e030e0"/>
<rect x="367" y="622" width="3" height="18" fill="#a890f0"/>
<path d="M402.5,586V622" stroke="#f020f0" stroke-width="1.2" fill="none"/>
<rect x="401.5" y="611" width="2" height="11" fill="#e030e0"/>
<rect x="401" y="622" width="3" height="18" fill="#a890f0"/>
<rect x="414" y="622" width="3" height="18" fill="#a890f0"/>
<path d="M438.5,585V622" stroke="#f020f0" stroke-width="1.2" fill="none"/>
<rect x="437.5" y="611" width="2" height="11" fill="#e030e0"/>
<rect x="437" y="622" width="3" height="18" fill="#a890f0"/>
<path d="M472.5,587V622" stroke="#f020f0" stroke-width="1.2" fill="none"/>
<rect x="471.5" y="611" width="2" height="11" fill="#e030e0"/>
<rect x="471" y="622" width="3" height="18" fill="#a890f0"/>
<path d="M507.5,586V622" stroke="#f020f0" stroke-width="1.2" fill="none"/>
<rect x="506.5" y="611" width="2" height="11" fill="#e030e0"/>
<rect x="506" y="622" width="3" height="18" fill="#a890f0"/>
<path d="M542.5,585V622" stroke="#f020f0" stroke-width="1.2" fill="none"/>
<rect x="541.5" y="611" width="2" height="11" fill="#e030e0"/>
<rect x="541" y="622" width="3" height="18" fill="#a890f0"/>
<path d="M577.5,586V622" stroke="#f020f0" stroke-width="1.2" fill="none"/>
<rect x="576.5" y="611" width="2" height="11" fill="#e030e0"/>
<rect x="576" y="622" width="3" height="18" fill="#a890f0"/>
<path d="M612.5,586V622" stroke="#f020f0" stroke-width="1.2" fill="none"/>
<rect x="611.5" y="611" width="2" height="11" fill="#e030e0"/>
<rect x="611" y="622" width="3" height="18" fill="#a890f0"/>
<path d="M647.5,588V622" stroke="#f020f0" stroke-width="1.2" fill="none"/>
<rect x="646.5" y="611" width="2" height="11" fill="#e030e0"/>
<rect x="646" y="622" width="3" height="18" fill="#a890f0"/>
<path d="M682.5,586V622" stroke="#f020f0" stroke-width="1.2" fill="none"/>
<rect x="681.5" y="611" width="2" height="11" fill="#e030e0"/>
<rect x="681" y="622" width="3" height="18" fill="#a890f0"/>
<path d="M45.5,692.8V622M46.5,622V650" stroke="#30f030" stroke-width="1" fill="none"/>
<path d="M393.5,689.9V664" stroke="#30e8e8" stroke-width="1" fill="none"/>
<path d="M675.5,689.8V652M677.5,694.9V652" stroke="#30e8e8" stroke-width="1" fill="none"/>
<line x1="11.5" y1="234" x2="11.5" y2="748" stroke="#dd22dd" stroke-width="1"/>
<rect x="11" y="437" width="1.5" height="21" fill="#f08070"/><rect x="11" y="458" width="1" height="7" fill="#8a8a9a"/>
<polyline points="12.0,604.0 12.0,580.9 13.5,596.0 14.5,582.0 15.5,597.7 16.5,578.2 18.5,604.5 20.5,570.7 21.5,602.5 23.5,587.5 25.0,596.3 26.5,581.5 27.5,602.5 29.0,580.4 30.0,596.2 31.0,576.7 33.0,603.3 34.5,575.4 35.5,604.6 36.5,575.4 38.0,597.6 39.0,573.0 41.0,599.9 42.5,581.2 43.5,601.7 45.0,575.7 46.0,597.0 47.5,585.6 48.5,595.3 50.5,579.1 51.5,602.1 52.5,577.4 54.0,599.0 56.0,574.5 58.0,602.8 59.5,571.3 61.0,597.6 62.0,579.7 63.0,594.3 65.0,585.2 66.5,600.2 67.5,579.0 69.5,599.6 71.0,574.2 72.5,594.3 74.0,578.1 75.0,600.7 76.0,574.7 77.5,600.7 79.0,582.3 80.5,595.5 81.5,579.8 82.5,594.7 84.5,574.8 86.0,601.3 87.5,587.4 89.5,597.8 90.5,577.7 91.5,595.8 93.0,578.6 95.0,599.0 96.0,597.0 97.0,605.0" fill="none" stroke="#f0f020" stroke-width="1"/>
<line x1="97.5" y1="81" x2="97.5" y2="604" stroke="#ffff40" stroke-width="1"/>
<line x1="97" y1="81.5" x2="708" y2="81.5" stroke="#ffff40" stroke-width="1"/>
<polygon points="34,555 50,555 42,569" fill="#fff"/>
<polygon points="219.5,571 235.5,571 227.5,587" fill="none" stroke="#fff" stroke-width="2"/>
<polygon points="465.5,572 481.5,572 473.5,589" fill="none" stroke="#fff" stroke-width="2"/>
<polygon points="604,572 620,572 612.0,589" fill="none" stroke="#fff" stroke-width="2"/>
</g></svg>
<div style="left:716px;top:82px;width:249px;height:104px;background:#e3e3e3;"></div>
<div class="t" style="left:723px;top:86.7px;font-size:12px;line-height:12px;color:#000;font-weight:bold;letter-spacing:-0.25px;">Display scaling</div>
<div class="t" style="left:731px;top:110.9px;font-size:12px;line-height:12px;color:#000;transform:scaleX(0.89);transform-origin:0 0;">Ref - dBm</div>
<div class="t" style="left:731px;top:137.9px;font-size:12px;line-height:12px;color:#000;transform:scaleX(0.89);transform-origin:0 0;">Range - dB</div>
<div class="t" style="left:729px;top:163.9px;font-size:12px;line-height:12px;color:#000;transform:scaleX(0.89);transform-origin:0 0;">Offset - dB</div>
<div style="left:790px;top:106px;width:31px;height:19px;background:#000;"></div>
<div class="t" style="left:793px;top:107px;height:19px;line-height:19px;font-size:12px;color:#fff;transform:scaleX(0.89);transform-origin:0 0">0</div>
<div style="left:821px;top:106px;width:18px;height:19px;background:#f0f0f0;"></div>
<div style="left:827.0px;top:114.0px;width:0;height:0;border-left:3px solid transparent;border-right:3px solid transparent;border-top:3px solid #000;"></div>
<div style="left:790px;top:133px;width:31px;height:19px;background:#808080;"></div>
<div class="t" style="left:793px;top:134px;height:19px;line-height:19px;font-size:12px;color:#e8e8e8;transform:scaleX(0.89);transform-origin:0 0">110</div>
<div style="left:821px;top:133px;width:18px;height:19px;background:#f0f0f0;"></div>
<div style="left:827.0px;top:141.0px;width:0;height:0;border-left:3px solid transparent;border-right:3px solid transparent;border-top:3px solid #000;"></div>
<div style="left:790px;top:159px;width:31px;height:19px;background:#808080;"></div>
<div class="t" style="left:793px;top:160px;height:19px;line-height:19px;font-size:12px;color:#e8e8e8;transform:scaleX(0.89);transform-origin:0 0">100</div>
<div style="left:821px;top:159px;width:18px;height:19px;background:#f0f0f0;"></div>
<div style="left:827.0px;top:167.0px;width:0;height:0;border-left:3px solid transparent;border-right:3px solid transparent;border-top:3px solid #000;"></div>
<div class="b" style="left:845px;top:132px;width:43px;height:23px;background:#cdcdcd;color:#000;font-size:12px;"><span style="display:inline-block;transform:scaleX(0.89)">S Dat</span></div>
<div class="b" style="left:845px;top:158px;width:43px;height:23px;background:#cdcdcd;color:#000;font-size:12px;"><span style="display:inline-block;transform:scaleX(0.89)">Enab</span></div>
<div class="b" style="left:899px;top:105px;width:60px;height:23px;background:#87cefa;color:#000;font-size:12px;"><span style="display:inline-block;transform:scaleX(0.89)">10dB/div</span></div>
<div class="b" style="left:899px;top:132px;width:60px;height:23px;background:#cdcdcd;color:#000;font-size:12px;"><span style="display:inline-block;transform:scaleX(0.89)">5dB/div</span></div>
<div class="b" style="left:899px;top:158px;width:60px;height:23px;background:#cdcdcd;color:#000;font-size:12px;"><span style="display:inline-block;transform:scaleX(0.89)">2dB/div</span></div>
<div style="left:716px;top:192px;width:249px;height:302px;background:#e3e3e3;"></div>
<div class="t" style="left:723px;top:195.2px;font-size:12px;line-height:12px;color:#000;font-weight:bold;letter-spacing:-0.25px;">Trace control</div>
<div class="b" style="left:725px;top:214px;width:43px;height:19px;background:#a9a9a9;color:#000;font-size:12.5px;font-weight:bold;letter-spacing:0;"><span style="display:inline-block;transform:scaleX(1)">M</span></div>
<div style="left:725px;top:236px;width:43px;height:9px;background:#ffffff;"></div>
<div class="b" style="left:773px;top:214px;width:43px;height:19px;background:#a9a9a9;color:#000;font-size:12.5px;font-weight:bold;letter-spacing:0;"><span style="display:inline-block;transform:scaleX(1)">1</span></div>
<div style="left:773px;top:236px;width:43px;height:9px;background:#ffff00;"></div>
<div class="b" style="left:821px;top:214px;width:43px;height:19px;background:#a9a9a9;color:#000;font-size:12.5px;font-weight:bold;letter-spacing:0;"><span style="display:inline-block;transform:scaleX(1)">2</span></div>
<div style="left:821px;top:236px;width:43px;height:9px;background:#00ffff;"></div>
<div class="b" style="left:869px;top:214px;width:43px;height:19px;background:#a9a9a9;color:#000;font-size:12.5px;font-weight:bold;letter-spacing:0;"><span style="display:inline-block;transform:scaleX(1)">3</span></div>
<div style="left:869px;top:236px;width:43px;height:9px;background:#00ff00;"></div>
<div class="b" style="left:917px;top:214px;width:43px;height:19px;background:#a9a9a9;color:#fff;font-size:12.5px;font-weight:bold;letter-spacing:0;"><span style="display:inline-block;transform:scaleX(1)">4</span></div>
<div style="left:917px;top:236px;width:43px;height:9px;background:#ff00ff;"></div>
<div class="b" style="left:725px;top:248px;width:43px;height:24px;background:#87cefa;color:#000;font-size:12px;"><span style="display:inline-block;transform:scaleX(0.89)">Hide</span></div>
<div class="b" style="left:773px;top:248px;width:43px;height:24px;background:#87cefa;color:#000;font-size:12px;"><span style="display:inline-block;transform:scaleX(0.89)">Hide</span></div>
<div class="b" style="left:821px;top:248px;width:43px;height:24px;background:#87cefa;color:#000;font-size:12px;"><span style="display:inline-block;transform:scaleX(0.89)">Hide</span></div>
<div class="b" style="left:869px;top:248px;width:43px;height:24px;background:#87cefa;color:#000;font-size:12px;"><span style="display:inline-block;transform:scaleX(0.89)">Hide</span></div>
<div class="b" style="left:917px;top:248px;width:43px;height:24px;background:#87cefa;color:#000;font-size:12px;"><span style="display:inline-block;transform:scaleX(0.89)">Hide</span></div>
<div class="b" style="left:725px;top:276px;width:43px;height:24px;background:#cdcdcd;color:#000;font-size:12px;"><span style="display:inline-block;transform:scaleX(0.89)">Hold</span></div>
<div class="b" style="left:773px;top:276px;width:43px;height:24px;background:#cdcdcd;color:#000;font-size:12px;"><span style="display:inline-block;transform:scaleX(0.89)">Hold</span></div>
<div class="b" style="left:821px;top:276px;width:43px;height:24px;background:#cdcdcd;color:#000;font-size:12px;"><span style="display:inline-block;transform:scaleX(0.89)">Hold</span></div>
<div class="b" style="left:869px;top:276px;width:43px;height:24px;background:#cdcdcd;color:#000;font-size:12px;"><span style="display:inline-block;transform:scaleX(0.89)">Hold</span></div>
<div class="b" style="left:917px;top:276px;width:43px;height:24px;background:#87cefa;color:#000;font-size:12px;"><span style="display:inline-block;transform:scaleX(0.89)">Rel</span></div>
<div class="b" style="left:725px;top:308px;width:43px;height:24px;background:#87cefa;color:#000;font-size:12px;"><span style="display:inline-block;transform:scaleX(0.89)">Raw</span></div>
<div class="b" style="left:773px;top:308px;width:43px;height:24px;background:#cdcdcd;color:#000;font-size:12px;"><span style="display:inline-block;transform:scaleX(0.89)">Raw</span></div>
<div class="b" style="left:821px;top:308px;width:43px;height:24px;background:#cdcdcd;color:#000;font-size:12px;"><span style="display:inline-block;transform:scaleX(0.89)">Raw</span></div>
<div class="b" style="left:869px;top:308px;width:43px;height:24px;background:#87cefa;color:#000;font-size:12px;"><span style="display:inline-block;transform:scaleX(0.89)">Raw</span></div>
<div class="b" style="left:917px;top:308px;width:43px;height:24px;background:#87cefa;color:#000;font-size:12px;"><span style="display:inline-block;transform:scaleX(0.89)">Raw</span></div>
<div class="b" style="left:725px;top:336px;width:43px;height:24px;background:#cdcdcd;color:#000;font-size:12px;"><span style="display:inline-block;transform:scaleX(0.89)">Peak</span></div>
<div class="b" style="left:773px;top:336px;width:43px;height:24px;background:#87cefa;color:#000;font-size:12px;"><span style="display:inline-block;transform:scaleX(0.89)">Peak</span></div>
<div class="b" style="left:821px;top:336px;width:43px;height:24px;background:#cdcdcd;color:#000;font-size:12px;"><span style="display:inline-block;transform:scaleX(0.89)">Peak</span></div>
<div class="b" style="left:869px;top:336px;width:43px;height:24px;background:#cdcdcd;color:#000;font-size:12px;"><span style="display:inline-block;transform:scaleX(0.89)">Peak</span></div>
<div class="b" style="left:917px;top:336px;width:43px;height:24px;background:#cdcdcd;color:#000;font-size:12px;"><span style="display:inline-block;transform:scaleX(0.89)">Peak</span></div>
<div class="b" style="left:725px;top:364px;width:43px;height:24px;background:#cdcdcd;color:#000;font-size:12px;"><span style="display:inline-block;transform:scaleX(0.89)">Avg</span></div>
<div class="b" style="left:773px;top:364px;width:43px;height:24px;background:#cdcdcd;color:#000;font-size:12px;"><span style="display:inline-block;transform:scaleX(0.89)">Avg</span></div>
<div class="b" style="left:821px;top:364px;width:43px;height:24px;background:#87cefa;color:#000;font-size:12px;"><span style="display:inline-block;transform:scaleX(0.89)">Avg</span></div>
<div class="b" style="left:869px;top:364px;width:43px;height:24px;background:#cdcdcd;color:#000;font-size:12px;"><span style="display:inline-block;transform:scaleX(0.89)">Avg</span></div>
<div class="b" style="left:917px;top:364px;width:43px;height:24px;background:#cdcdcd;color:#000;font-size:12px;"><span style="display:inline-block;transform:scaleX(0.89)">Avg</span></div>
<div class="b" style="left:725px;top:396px;width:43px;height:24px;background:#cdcdcd;color:#000;font-size:12px;"><span style="display:inline-block;transform:scaleX(0.89)">DM</span></div>
<div class="b" style="left:773px;top:396px;width:43px;height:24px;background:#cdcdcd;color:#000;font-size:12px;"><span style="display:inline-block;transform:scaleX(0.89)">DM</span></div>
<div class="b" style="left:821px;top:396px;width:43px;height:24px;background:#cdcdcd;color:#000;font-size:12px;"><span style="display:inline-block;transform:scaleX(0.89)">DM</span></div>
<div class="b" style="left:869px;top:396px;width:43px;height:24px;background:#87cefa;color:#000;font-size:12px;"><span style="display:inline-block;transform:scaleX(0.89)">DM</span></div>
<div class="b" style="left:917px;top:396px;width:43px;height:24px;background:#cdcdcd;color:#000;font-size:12px;"><span style="display:inline-block;transform:scaleX(0.89)">DM</span></div>
<div class="b" style="left:725px;top:424px;width:43px;height:24px;background:#cdcdcd;color:#000;font-size:12px;"><span style="display:inline-block;transform:scaleX(0.89)">DO</span></div>
<div class="b" style="left:773px;top:424px;width:43px;height:24px;background:#cdcdcd;color:#000;font-size:12px;"><span style="display:inline-block;transform:scaleX(0.89)">DO</span></div>
<div class="b" style="left:821px;top:424px;width:43px;height:24px;background:#cdcdcd;color:#000;font-size:12px;"><span style="display:inline-block;transform:scaleX(0.89)">DO</span></div>
<div class="b" style="left:869px;top:424px;width:43px;height:24px;background:#cdcdcd;color:#000;font-size:12px;"><span style="display:inline-block;transform:scaleX(0.89)">DO</span></div>
<div class="b" style="left:917px;top:424px;width:43px;height:24px;background:#cdcdcd;color:#000;font-size:12px;"><span style="display:inline-block;transform:scaleX(0.89)">DO</span></div>
<div class="t" style="left:726px;top:466.9px;font-size:12px;line-height:12px;color:#000;transform:scaleX(0.89);transform-origin:0 0;">Ref trace</div>
<div style="left:774px;top:462px;width:21px;height:19px;background:#000;"></div>
<div class="t" style="left:777px;top:463px;height:19px;line-height:19px;font-size:12px;color:#fff;transform:scaleX(0.89);transform-origin:0 0">M</div>
<div style="left:795px;top:462px;width:18px;height:19px;background:#f0f0f0;"></div>
<div style="left:801.0px;top:470.0px;width:0;height:0;border-left:3px solid transparent;border-right:3px solid transparent;border-top:3px solid #000;"></div>
<div class="b" style="left:821px;top:460px;width:43px;height:24px;background:#cdcdcd;color:#000;font-size:12px;"><span style="display:inline-block;transform:scaleX(0.89)">Diff</span></div>
<div class="b" style="left:870px;top:460px;width:23px;height:24px;background:#cdcdcd;color:#000;font-size:12px;"><span style="display:inline-block;transform:scaleX(0.89)">T</span></div>
<div class="t" style="left:895px;top:466.9px;font-size:12px;line-height:12px;color:#000;transform:scaleX(0.89);transform-origin:0 0;">Avg</div>
<div style="left:921px;top:462px;width:21px;height:19px;background:#000;"></div>
<div class="t" style="left:924px;top:463px;height:19px;line-height:19px;font-size:12px;color:#fff;transform:scaleX(0.89);transform-origin:0 0">20</div>
<div style="left:942px;top:462px;width:18px;height:19px;background:#f0f0f0;"></div>
<div style="left:948.0px;top:470.0px;width:0;height:0;border-left:3px solid transparent;border-right:3px solid transparent;border-top:3px solid #000;"></div>
<div style="left:716px;top:500px;width:249px;height:249px;background:#e3e3e3;"></div>
<div class="t" style="left:723px;top:510.7px;font-size:12px;line-height:12px;color:#000;font-weight:bold;letter-spacing:-0.25px;">Markers</div>
<div class="b" style="left:775px;top:506px;width:20px;height:20px;background:#a9a9a9;color:#000;font-size:12.5px;font-weight:bold;letter-spacing:0;"><span style="display:inline-block;transform:scaleX(1)">A</span></div>
<div class="b" style="left:798px;top:506px;width:20px;height:20px;background:#87cefa;color:#000;font-size:12px;"><span style="display:inline-block;transform:scaleX(0.89)">F</span></div>
<div style="left:823px;top:506px;width:19px;height:20px;background:#000;"></div>
<div class="t" style="left:826px;top:507px;height:20px;line-height:20px;font-size:12px;color:#fff;transform:scaleX(0.89);transform-origin:0 0">1</div>
<div style="left:842px;top:506px;width:18px;height:20px;background:#f0f0f0;"></div>
<div style="left:848.0px;top:514.5px;width:0;height:0;border-left:3px solid transparent;border-right:3px solid transparent;border-top:3px solid #000;"></div>
<div class="b" style="left:875px;top:506px;width:20px;height:20px;background:#a9a9a9;color:#000;font-size:12.5px;font-weight:bold;letter-spacing:0;"><span style="display:inline-block;transform:scaleX(1)">B</span></div>
<div class="b" style="left:898px;top:506px;width:20px;height:20px;background:#87cefa;color:#000;font-size:12px;"><span style="display:inline-block;transform:scaleX(0.89)">F</span></div>
<div style="left:922px;top:506px;width:19px;height:20px;background:#000;"></div>
<div class="t" style="left:925px;top:507px;height:20px;line-height:20px;font-size:12px;color:#fff;transform:scaleX(0.89);transform-origin:0 0">2</div>
<div style="left:941px;top:506px;width:18px;height:20px;background:#f0f0f0;"></div>
<div style="left:947.0px;top:514.5px;width:0;height:0;border-left:3px solid transparent;border-right:3px solid transparent;border-top:3px solid #000;"></div>
<div class="b" style="left:725px;top:531px;width:37px;height:20px;background:#87cefa;color:#000;font-size:12px;"><span style="display:inline-block;transform:scaleX(0.89)">On</span></div>
<div class="b" style="left:775px;top:531px;width:20px;height:20px;background:#a9a9a9;color:#000;font-size:12.5px;font-weight:bold;letter-spacing:0;"><span style="display:inline-block;transform:scaleX(1)">C</span></div>
<div class="b" style="left:798px;top:531px;width:20px;height:20px;background:#87cefa;color:#000;font-size:12px;"><span style="display:inline-block;transform:scaleX(0.89)">F</span></div>
<div style="left:823px;top:531px;width:19px;height:20px;background:#000;"></div>
<div class="t" style="left:826px;top:532px;height:20px;line-height:20px;font-size:12px;color:#fff;transform:scaleX(0.89);transform-origin:0 0">3</div>
<div style="left:842px;top:531px;width:18px;height:20px;background:#f0f0f0;"></div>
<div style="left:848.0px;top:539.5px;width:0;height:0;border-left:3px solid transparent;border-right:3px solid transparent;border-top:3px solid #000;"></div>
<div class="b" style="left:875px;top:531px;width:20px;height:20px;background:#a9a9a9;color:#fff;font-size:12.5px;font-weight:bold;letter-spacing:0;"><span style="display:inline-block;transform:scaleX(1)">D</span></div>
<div class="b" style="left:898px;top:531px;width:20px;height:20px;background:#87cefa;color:#000;font-size:12px;"><span style="display:inline-block;transform:scaleX(0.89)">F</span></div>
<div style="left:922px;top:531px;width:19px;height:20px;background:#000;"></div>
<div class="t" style="left:925px;top:532px;height:20px;line-height:20px;font-size:12px;color:#fff;transform:scaleX(0.89);transform-origin:0 0">4</div>
<div style="left:941px;top:531px;width:18px;height:20px;background:#f0f0f0;"></div>
<div style="left:947.0px;top:539.5px;width:0;height:0;border-left:3px solid transparent;border-right:3px solid transparent;border-top:3px solid #000;"></div>
<div class="t" style="left:734px;top:563.4px;font-size:12px;line-height:12px;color:#000;transform:scaleX(0.89);transform-origin:0 0;">Mkr 1</div>
<div class="t" style="left:788px;top:563.4px;font-size:12px;line-height:12px;color:#000;transform:scaleX(0.89);transform-origin:0 0;">Mkr 2</div>
<div class="t" style="left:831px;top:563.4px;font-size:12px;line-height:12px;color:#000;transform:scaleX(0.89);transform-origin:0 0;">Freq</div>
<div class="t" style="left:902px;top:563.4px;font-size:12px;line-height:12px;color:#000;transform:scaleX(0.89);transform-origin:0 0;">Level</div>
<div style="left:732px;top:581px;width:14px;height:20px;background:#000;"></div>
<div class="t" style="left:735px;top:582px;height:20px;line-height:20px;font-size:12px;color:#fff;transform:scaleX(0.89);transform-origin:0 0">A</div>
<div style="left:746px;top:581px;width:18px;height:20px;background:#f0f0f0;"></div>
<div style="left:752.0px;top:589.5px;width:0;height:0;border-left:3px solid transparent;border-right:3px solid transparent;border-top:3px solid #000;"></div>
<div style="left:772px;top:591px;width:6px;height:1px;background:#000"></div>
<div style="left:785px;top:581px;width:14px;height:20px;background:#000;"></div>
<div class="t" style="left:788px;top:582px;height:20px;line-height:20px;font-size:12px;color:#fff;transform:scaleX(0.89);transform-origin:0 0">B</div>
<div style="left:799px;top:581px;width:18px;height:20px;background:#f0f0f0;"></div>
<div style="left:805.0px;top:589.5px;width:0;height:0;border-left:3px solid transparent;border-right:3px solid transparent;border-top:3px solid #000;"></div>
<div class="t" style="left:829px;top:585.0px;font-size:12.5px;line-height:12.5px;color:#000;font-weight:bold;letter-spacing:0px;">-7.048711</div>
<div class="t" style="left:901px;top:585.0px;font-size:12.5px;line-height:12.5px;color:#000;font-weight:bold;letter-spacing:0px;">0.3</div>
<div style="left:732px;top:604px;width:14px;height:20px;background:#000;"></div>
<div class="t" style="left:735px;top:605px;height:20px;line-height:20px;font-size:12px;color:#fff;transform:scaleX(0.89);transform-origin:0 0">A</div>
<div style="left:746px;top:604px;width:18px;height:20px;background:#f0f0f0;"></div>
<div style="left:752.0px;top:612.5px;width:0;height:0;border-left:3px solid transparent;border-right:3px solid transparent;border-top:3px solid #000;"></div>
<div style="left:772px;top:614px;width:6px;height:1px;background:#000"></div>
<div style="left:785px;top:604px;width:14px;height:20px;background:#000;"></div>
<div class="t" style="left:788px;top:605px;height:20px;line-height:20px;font-size:12px;color:#fff;transform:scaleX(0.89);transform-origin:0 0">D</div>
<div style="left:799px;top:604px;width:18px;height:20px;background:#f0f0f0;"></div>
<div style="left:805.0px;top:612.5px;width:0;height:0;border-left:3px solid transparent;border-right:3px solid transparent;border-top:3px solid #000;"></div>
<div class="t" style="left:829px;top:608.0px;font-size:12.5px;line-height:12.5px;color:#000;font-weight:bold;letter-spacing:0px;">5.300860</div>
<div class="t" style="left:901px;top:608.0px;font-size:12.5px;line-height:12.5px;color:#000;font-weight:bold;letter-spacing:0px;">-2.5</div>
<div style="left:732px;top:628px;width:14px;height:20px;background:#000;"></div>
<div class="t" style="left:735px;top:629px;height:20px;line-height:20px;font-size:12px;color:#fff;transform:scaleX(0.89);transform-origin:0 0">A</div>
<div style="left:746px;top:628px;width:18px;height:20px;background:#f0f0f0;"></div>
<div style="left:752.0px;top:636.5px;width:0;height:0;border-left:3px solid transparent;border-right:3px solid transparent;border-top:3px solid #000;"></div>
<div style="left:772px;top:638px;width:6px;height:1px;background:#000"></div>
<div style="left:785px;top:628px;width:14px;height:20px;background:#000;"></div>
<div class="t" style="left:788px;top:629px;height:20px;line-height:20px;font-size:12px;color:#fff;transform:scaleX(0.89);transform-origin:0 0">C</div>
<div style="left:799px;top:628px;width:18px;height:20px;background:#f0f0f0;"></div>
<div style="left:805.0px;top:636.5px;width:0;height:0;border-left:3px solid transparent;border-right:3px solid transparent;border-top:3px solid #000;"></div>
<div class="t" style="left:829px;top:632.0px;font-size:12.5px;line-height:12.5px;color:#000;font-weight:bold;letter-spacing:0px;">-11.031519</div>
<div class="t" style="left:901px;top:632.0px;font-size:12.5px;line-height:12.5px;color:#000;font-weight:bold;letter-spacing:0px;">0.3</div>
<div style="left:732px;top:652px;width:14px;height:20px;background:#000;"></div>
<div class="t" style="left:735px;top:653px;height:20px;line-height:20px;font-size:12px;color:#fff;transform:scaleX(0.89);transform-origin:0 0">B</div>
<div style="left:746px;top:652px;width:18px;height:20px;background:#f0f0f0;"></div>
<div style="left:752.0px;top:660.5px;width:0;height:0;border-left:3px solid transparent;border-right:3px solid transparent;border-top:3px solid #000;"></div>
<div style="left:772px;top:662px;width:6px;height:1px;background:#000"></div>
<div style="left:785px;top:652px;width:14px;height:20px;background:#000;"></div>
<div class="t" style="left:788px;top:653px;height:20px;line-height:20px;font-size:12px;color:#fff;transform:scaleX(0.89);transform-origin:0 0">C</div>
<div style="left:799px;top:652px;width:18px;height:20px;background:#f0f0f0;"></div>
<div style="left:805.0px;top:660.5px;width:0;height:0;border-left:3px solid transparent;border-right:3px solid transparent;border-top:3px solid #000;"></div>
<div class="t" style="left:829px;top:656.0px;font-size:12.5px;line-height:12.5px;color:#000;font-weight:bold;letter-spacing:0px;">-3.982808</div>
<div class="t" style="left:901px;top:656.0px;font-size:12.5px;line-height:12.5px;color:#000;font-weight:bold;letter-spacing:0px;">0.0</div>
<div class="b" style="left:725px;top:681px;width:75px;height:24px;background:#b4b4b4;color:#000;font-size:12px;"><span style="display:inline-block;transform:scaleX(0.89)">Enab peaks</span></div>
<div class="b" style="left:809px;top:681px;width:40px;height:24px;background:#cdcdcd;color:#5f5f5f;font-size:12px;"><span style="display:inline-block;transform:scaleX(0.89)">First</span></div>
<div class="b" style="left:858px;top:681px;width:40px;height:24px;background:#cdcdcd;color:#5f5f5f;font-size:12px;"><span style="display:inline-block;transform:scaleX(0.89)">Prev</span></div>
<div class="b" style="left:906px;top:681px;width:40px;height:24px;background:#cdcdcd;color:#5f5f5f;font-size:12px;"><span style="display:inline-block;transform:scaleX(0.89)">Next</span></div>
<div class="t" style="left:731px;top:710.9px;font-size:12px;line-height:12px;color:#000;transform:scaleX(0.89);transform-origin:0 0;">Freq</div>
<div class="t" style="left:764px;top:710.2px;font-size:12px;line-height:12px;color:#0000cd;font-weight:bold;letter-spacing:0px;">&lt; &gt;</div>
<div class="t" style="left:835px;top:710.9px;font-size:12px;line-height:12px;color:#000;transform:scaleX(0.89);transform-origin:0 0;">Level</div>
<div class="t" style="left:872px;top:710.2px;font-size:12px;line-height:12px;color:#0000cd;font-weight:bold;letter-spacing:0px;">&lt; &gt;</div>
<div class="t" style="left:731px;top:729.9px;font-size:12px;line-height:12px;color:#000;transform:scaleX(0.89);transform-origin:0 0;">Min peak - dB</div>
<div class="t" style="left:856px;top:729.9px;font-size:12px;line-height:12px;color:#000;transform:scaleX(0.89);transform-origin:0 0;">Win width</div>
<div style="left:803px;top:727px;width:28px;height:16px;background:#f4f4f4;"></div>
<div class="t" style="left:805px;top:729.9px;font-size:12px;line-height:12px;color:#a0a0a0;transform:scaleX(0.89);transform-origin:0 0;">10</div>
<div style="left:831px;top:727px;width:15px;height:16px;background:#e8e8e8;border:1px solid #d0d0d0;"></div>
<div style="left:836px;top:730px;border-left:2.5px solid transparent;border-right:2.5px solid transparent;border-bottom:3px solid #777;"></div>
<div style="left:836px;top:736px;border-left:2.5px solid transparent;border-right:2.5px solid transparent;border-top:3px solid #777;"></div>
<div style="left:911px;top:727px;width:28px;height:16px;background:#f4f4f4;"></div>
<div class="t" style="left:913px;top:729.9px;font-size:12px;line-height:12px;color:#a0a0a0;transform:scaleX(0.89);transform-origin:0 0;">10</div>
<div style="left:939px;top:727px;width:15px;height:16px;background:#e8e8e8;border:1px solid #d0d0d0;"></div>
<div style="left:944px;top:730px;border-left:2.5px solid transparent;border-right:2.5px solid transparent;border-bottom:3px solid #777;"></div>
<div style="left:944px;top:736px;border-left:2.5px solid transparent;border-right:2.5px solid transparent;border-top:3px solid #777;"></div>
<div style="left:971px;top:37px;width:246px;height:418px;background:#e3e3e3;"></div>
<div class="t" style="left:977px;top:42.2px;font-size:12px;line-height:12px;color:#000;font-weight:bold;letter-spacing:0px;">Centre frequency - MHz</div>
<div style="left:977px;top:59px;width:234px;height:35px;background:#000;"></div>
<div class="t" style="left:1013.5px;top:64.9px;font-size:24px;line-height:24px;color:#fff;letter-spacing:2.6px;">10.000000</div>
<div class="b" style="left:1160px;top:67px;width:22px;height:20px;background:#87cefa;color:#000;font-size:12px;"><span style="display:inline-block;transform:scaleX(0.89)">A</span></div>
<div class="b" style="left:1184px;top:67px;width:22px;height:20px;background:#cdcdcd;color:#000;font-size:12px;"><span style="display:inline-block;transform:scaleX(0.89)">B</span></div>
<div class="t" style="left:990px;top:101.9px;font-size:12px;line-height:12px;color:#000;transform:scaleX(0.89);transform-origin:0 0;">Start - kHz</div>
<div class="t" style="left:1050.5px;top:100.5px;font-size:13.5px;line-height:13.5px;color:#0000cd;font-weight:bold;letter-spacing:0px;transform:scaleX(1.2);transform-origin:0 0;">0.000</div>
<div class="t" style="left:990px;top:121.9px;font-size:12px;line-height:12px;color:#000;transform:scaleX(0.89);transform-origin:0 0;">End - MHz</div>
<div class="t" style="left:1050.5px;top:120.5px;font-size:13.5px;line-height:13.5px;color:#0000cd;font-weight:bold;letter-spacing:0px;transform:scaleX(1.2);transform-origin:0 0;">20.000000</div>
<div class="t" style="left:991px;top:141.2px;font-size:12px;line-height:12px;color:#000;font-weight:bold;letter-spacing:0px;">Span</div>
<div class="t" style="left:1059px;top:141.9px;font-size:12px;line-height:12px;color:#000;transform:scaleX(0.89);transform-origin:0 0;">Sweep time - secs</div>
<div class="t" style="left:1159px;top:141.0px;font-size:12.5px;line-height:12.5px;color:#000;font-weight:bold;letter-spacing:0px;">9.13</div>
<div class="b" style="left:987px;top:158px;width:60px;height:20px;background:#cdcdcd;font-size:12px;justify-content:flex-start;padding-left:7px;padding-top:2.5px"><span style="display:inline-block;transform:scaleX(0.89);transform-origin:0 0">1 kHz</span></div>
<div class="b" style="left:1060px;top:158px;width:60px;height:20px;background:#cdcdcd;font-size:12px;justify-content:flex-start;padding-left:7px;padding-top:2.5px"><span style="display:inline-block;transform:scaleX(0.89);transform-origin:0 0">2 kHz</span></div>
<div class="b" style="left:1135px;top:158px;width:60px;height:20px;background:#cdcdcd;font-size:12px;justify-content:flex-start;padding-left:7px;padding-top:2.5px"><span style="display:inline-block;transform:scaleX(0.89);transform-origin:0 0">5 kHz</span></div>
<div class="b" style="left:987px;top:181px;width:60px;height:20px;background:#cdcdcd;font-size:12px;justify-content:flex-start;padding-left:7px;padding-top:2.5px"><span style="display:inline-block;transform:scaleX(0.89);transform-origin:0 0">10 kHz</span></div>
<div class="b" style="left:1060px;top:181px;width:60px;height:20px;background:#cdcdcd;font-size:12px;justify-content:flex-start;padding-left:7px;padding-top:2.5px"><span style="display:inline-block;transform:scaleX(0.89);transform-origin:0 0">20 kHz</span></div>
<div class="b" style="left:1135px;top:181px;width:60px;height:20px;background:#cdcdcd;font-size:12px;justify-content:flex-start;padding-left:7px;padding-top:2.5px"><span style="display:inline-block;transform:scaleX(0.89);transform-origin:0 0">50 kHz</span></div>
<div class="b" style="left:987px;top:204px;width:60px;height:20px;background:#cdcdcd;font-size:12px;justify-content:flex-start;padding-left:7px;padding-top:2.5px"><span style="display:inline-block;transform:scaleX(0.89);transform-origin:0 0">100 kHz</span></div>
<div class="b" style="left:1060px;top:204px;width:60px;height:20px;background:#cdcdcd;font-size:12px;justify-content:flex-start;padding-left:7px;padding-top:2.5px"><span style="display:inline-block;transform:scaleX(0.89);transform-origin:0 0">200 kHz</span></div>
<div class="b" style="left:1135px;top:204px;width:60px;height:20px;background:#cdcdcd;font-size:12px;justify-content:flex-start;padding-left:7px;padding-top:2.5px"><span style="display:inline-block;transform:scaleX(0.89);transform-origin:0 0">500 kHz</span></div>
<div class="b" style="left:987px;top:227px;width:60px;height:20px;background:#cdcdcd;font-size:12px;justify-content:flex-start;padding-left:7px;padding-top:2.5px"><span style="display:inline-block;transform:scaleX(0.89);transform-origin:0 0">1 MHz</span></div>
<div class="b" style="left:1060px;top:227px;width:60px;height:20px;background:#cdcdcd;font-size:12px;justify-content:flex-start;padding-left:7px;padding-top:2.5px"><span style="display:inline-block;transform:scaleX(0.89);transform-origin:0 0">2 MHz</span></div>
<div class="b" style="left:1135px;top:227px;width:60px;height:20px;background:#cdcdcd;font-size:12px;justify-content:flex-start;padding-left:7px;padding-top:2.5px"><span style="display:inline-block;transform:scaleX(0.89);transform-origin:0 0">5 MHz</span></div>
<div class="b" style="left:987px;top:250px;width:60px;height:20px;background:#cdcdcd;font-size:12px;justify-content:flex-start;padding-left:7px;padding-top:2.5px"><span style="display:inline-block;transform:scaleX(0.89);transform-origin:0 0">10 MHz</span></div>
<div class="b" style="left:1060px;top:250px;width:60px;height:20px;background:#87cefa;font-size:12px;justify-content:flex-start;padding-left:7px;padding-top:2.5px"><span style="display:inline-block;transform:scaleX(0.89);transform-origin:0 0">20 MHz</span></div>
<div class="b" style="left:1135px;top:250px;width:60px;height:20px;background:#cdcdcd;font-size:12px;justify-content:flex-start;padding-left:7px;padding-top:2.5px"><span style="display:inline-block;transform:scaleX(0.89);transform-origin:0 0">50 MHz</span></div>
<div class="b" style="left:987px;top:273px;width:60px;height:20px;background:#cdcdcd;font-size:12px;justify-content:flex-start;padding-left:7px;padding-top:2.5px"><span style="display:inline-block;transform:scaleX(0.89);transform-origin:0 0">100 MHz</span></div>
<div class="b" style="left:1060px;top:273px;width:60px;height:20px;background:#cdcdcd;font-size:12px;justify-content:flex-start;padding-left:7px;padding-top:2.5px"><span style="display:inline-block;transform:scaleX(0.89);transform-origin:0 0">200 MHz</span></div>
<div class="b" style="left:1135px;top:273px;width:60px;height:20px;background:#cdcdcd;font-size:12px;justify-content:flex-start;padding-left:7px;padding-top:2.5px"><span style="display:inline-block;transform:scaleX(0.89);transform-origin:0 0">500 MHz</span></div>
<div class="b" style="left:987px;top:296px;width:60px;height:20px;background:#cdcdcd;font-size:12px;justify-content:flex-start;padding-left:7px;padding-top:2.5px"><span style="display:inline-block;transform:scaleX(0.89);transform-origin:0 0">1 GHz</span></div>
<div class="b" style="left:1060px;top:296px;width:60px;height:20px;background:#cdcdcd;font-size:12px;justify-content:flex-start;padding-left:7px;padding-top:2.5px"><span style="display:inline-block;transform:scaleX(0.89);transform-origin:0 0">2 GHz</span></div>
<div class="t" style="left:992px;top:328.7px;font-size:12px;line-height:12px;color:#000;font-weight:bold;letter-spacing:0px;">IF-kHz</div>
<div class="b" style="left:988px;top:347px;width:60px;height:20px;background:#87cefa;color:#000;font-size:12px;"><span style="display:inline-block;transform:scaleX(0.89)">2048</span></div>
<div class="b" style="left:988px;top:370px;width:60px;height:20px;background:#cdcdcd;color:#5f5f5f;font-size:12px;"><span style="display:inline-block;transform:scaleX(0.89)">450</span></div>
<div class="b" style="left:988px;top:394px;width:60px;height:20px;background:#cdcdcd;color:#000;font-size:12px;"><span style="display:inline-block;transform:scaleX(0.89)">Zero IF</span></div>
<div class="t" style="left:1064px;top:377.9px;font-size:12px;line-height:12px;color:#000;transform:scaleX(0.89);transform-origin:0 0;">Clock spur removal</div>
<div class="b" style="left:1158px;top:372px;width:37px;height:20px;background:#87cefa;color:#000;font-size:12px;"><span style="display:inline-block;transform:scaleX(0.89)">On</span></div>
<div class="t" style="left:1064px;top:400.9px;font-size:12px;line-height:12px;color:#000;transform:scaleX(0.89);transform-origin:0 0;">Window</div>
<div style="left:1109px;top:395px;width:69px;height:21px;background:#fff;"></div>
<div class="t" style="left:1112px;top:396px;height:21px;line-height:21px;font-size:12px;color:#000;transform:scaleX(0.89);transform-origin:0 0">Blackman</div>
<div style="left:1178px;top:395px;width:17px;height:21px;background:#f0f0f0;"></div>
<div style="left:1183.5px;top:404.0px;width:0;height:0;border-left:3px solid transparent;border-right:3px solid transparent;border-top:3px solid #000;"></div>
<div class="t" style="left:987px;top:431.9px;font-size:12px;line-height:12px;color:#000;transform:scaleX(0.89);transform-origin:0 0;">NFFT</div>
<div style="left:1023px;top:427px;width:53px;height:21px;background:#fff;"></div>
<div class="t" style="left:1026px;top:428px;height:21px;line-height:21px;font-size:12px;color:#000;transform:scaleX(0.89);transform-origin:0 0">262144</div>
<div style="left:1076px;top:427px;width:17px;height:21px;background:#f0f0f0;"></div>
<div style="left:1081.5px;top:436.0px;width:0;height:0;border-left:3px solid transparent;border-right:3px solid transparent;border-top:3px solid #000;"></div>
<div class="t" style="left:1102px;top:431.9px;font-size:12px;line-height:12px;color:#000;transform:scaleX(0.89);transform-origin:0 0;">Res Bw - Hz</div>
<div class="t" style="left:1166px;top:431.0px;font-size:12.5px;line-height:12.5px;color:#000;font-weight:bold;letter-spacing:0px;">7.81</div>
<div style="left:971px;top:460px;width:246px;height:34px;background:#e3e3e3;"></div>
<div class="b" style="left:979px;top:466px;width:70px;height:23px;background:#cdcdcd;color:#000;font-size:12px;"><span style="display:inline-block;transform:scaleX(0.89)">Track gen</span></div>
<div class="b" style="left:1063px;top:466px;width:70px;height:23px;background:#87cefa;color:#000;font-size:12px;"><span style="display:inline-block;transform:scaleX(0.89)">Input</span></div>
<div style="left:971px;top:498px;width:246px;height:251px;background:#e3e3e3;"></div>
<div class="t" style="left:978px;top:502.2px;font-size:12px;line-height:12px;color:#000;font-weight:bold;letter-spacing:0px;">Input</div>
<div class="t" style="left:986px;top:521.9px;font-size:12px;line-height:12px;color:#000;transform:scaleX(0.89);transform-origin:0 0;">RSP Select</div>
<div style="left:1057px;top:517px;width:147px;height:19px;background:#e8e8e8;border:1px solid #b9b9b9;"></div>
<div class="t" style="left:1062px;top:521.9px;font-size:12px;line-height:12px;color:#9a9a9a;transform:scaleX(0.89);transform-origin:0 0;">RSP1</div>
<div style="left:1190px;top:526px;width:0;height:0;border-left:3px solid transparent;border-right:3px solid transparent;border-top:3px solid #9a9a9a;"></div>
<div class="b" style="left:1115px;top:544px;width:58px;height:21px;background:#cdcdcd;color:#5f5f5f;font-size:12px;"><span style="display:inline-block;transform:scaleX(0.89)">Tuner 1</span></div>
<div class="b" style="left:985px;top:571px;width:58px;height:21px;background:#cdcdcd;color:#5f5f5f;font-size:12px;"><span style="display:inline-block;transform:scaleX(0.89)">Ant A</span></div>
<div class="b" style="left:1051px;top:571px;width:58px;height:21px;background:#cdcdcd;color:#5f5f5f;font-size:12px;"><span style="display:inline-block;transform:scaleX(0.89)">BC/FM</span></div>
<div class="b" style="left:1115px;top:571px;width:58px;height:21px;background:#cdcdcd;color:#5f5f5f;font-size:12px;"><span style="display:inline-block;transform:scaleX(0.89)">Tuner 2</span></div>
<div class="b" style="left:985px;top:599px;width:58px;height:21px;background:#cdcdcd;color:#5f5f5f;font-size:12px;"><span style="display:inline-block;transform:scaleX(0.89)">Ant B</span></div>
<div class="b" style="left:1051px;top:599px;width:58px;height:21px;background:#cdcdcd;color:#5f5f5f;font-size:12px;"><span style="display:inline-block;transform:scaleX(0.89)">DAB</span></div>
<div class="b" style="left:1115px;top:599px;width:58px;height:21px;background:#cdcdcd;color:#5f5f5f;font-size:12px;"><span style="display:inline-block;transform:scaleX(0.89)">BiasT</span></div>
<div class="t" style="left:985px;top:633.9px;font-size:12px;line-height:12px;color:#000;transform:scaleX(0.89);transform-origin:0 0;">dBm Trim</div>
<div style="left:1041px;top:631px;width:32px;height:16px;background:#fff;"></div>
<div class="t" style="left:1043px;top:632.9px;font-size:12px;line-height:12px;color:#000;transform:scaleX(0.89);transform-origin:0 0;">0.0</div>
<div style="left:1073px;top:631px;width:14px;height:16px;background:#f0f0f0;"></div>
<div style="left:1077px;top:634px;border-left:3px solid transparent;border-right:3px solid transparent;border-bottom:3px solid #000;"></div>
<div style="left:1077px;top:641px;border-left:3px solid transparent;border-right:3px solid transparent;border-top:3px solid #000;"></div>
<div class="b" style="left:1094px;top:629px;width:29px;height:20px;background:#cdcdcd;color:#000;font-size:12px;"><span style="display:inline-block;transform:scaleX(0.89)">Off</span></div>
<div class="t" style="left:985px;top:657.9px;font-size:12px;line-height:12px;color:#000;transform:scaleX(0.89);transform-origin:0 0;">Offset dB</div>
<div style="left:1041px;top:655px;width:32px;height:16px;background:#fff;"></div>
<div class="t" style="left:1043px;top:656.9px;font-size:12px;line-height:12px;color:#000;transform:scaleX(0.89);transform-origin:0 0;">0.0</div>
<div style="left:1073px;top:655px;width:14px;height:16px;background:#f0f0f0;"></div>
<div style="left:1077px;top:658px;border-left:3px solid transparent;border-right:3px solid transparent;border-bottom:3px solid #000;"></div>
<div style="left:1077px;top:665px;border-left:3px solid transparent;border-right:3px solid transparent;border-top:3px solid #000;"></div>
<div class="b" style="left:1094px;top:653px;width:29px;height:20px;background:#cdcdcd;color:#000;font-size:12px;"><span style="display:inline-block;transform:scaleX(0.89)">Off</span></div>
<div class="t" style="left:985px;top:680.9px;font-size:12px;line-height:12px;color:#000;transform:scaleX(0.89);transform-origin:0 0;">PPM Trim</div>
<div style="left:1041px;top:678px;width:32px;height:16px;background:#fff;"></div>
<div class="t" style="left:1043px;top:679.9px;font-size:12px;line-height:12px;color:#000;transform:scaleX(0.89);transform-origin:0 0;">0.000</div>
<div style="left:1073px;top:678px;width:14px;height:16px;background:#f0f0f0;"></div>
<div style="left:1077px;top:681px;border-left:3px solid transparent;border-right:3px solid transparent;border-bottom:3px solid #000;"></div>
<div style="left:1077px;top:688px;border-left:3px solid transparent;border-right:3px solid transparent;border-top:3px solid #000;"></div>
<div class="b" style="left:1177px;top:628px;width:32px;height:21px;background:#008000;color:#fff;font-size:12px;"><span style="display:inline-block;transform:scaleX(0.89)">Cal</span></div>
<div class="b" style="left:1177px;top:655px;width:32px;height:22px;background:#008000;color:#fff;font-size:12px;"><span style="display:inline-block;transform:scaleX(0.89)">ADC</span></div>
<div class="t" style="left:986px;top:705.9px;font-size:12px;line-height:12px;color:#000;transform:scaleX(0.89);transform-origin:0 0;">LNA gr</div>
<div class="t" style="left:1051px;top:705.0px;font-size:12.5px;line-height:12.5px;color:#000;font-weight:bold;letter-spacing:0px;">43</div>
<div class="t" style="left:1106px;top:705.9px;font-size:12px;line-height:12px;color:#000;transform:scaleX(0.89);transform-origin:0 0;">System gr</div>
<div style="left:1171px;top:700px;width:46px;height:20px;overflow:hidden"><div class="t" style="left:0;top:4.8px;font-size:12.5px;line-height:12.5px;font-weight:bold;letter-spacing:0">4294967295</div></div>
<div class="t" style="left:986px;top:724.4px;font-size:12px;line-height:12px;color:#000;transform:scaleX(0.89);transform-origin:0 0;">Current gain</div>
<div class="t" style="left:1052px;top:723.5px;font-size:12.5px;line-height:12.5px;color:#000;font-weight:bold;letter-spacing:0px;">59</div>
</body></html>
